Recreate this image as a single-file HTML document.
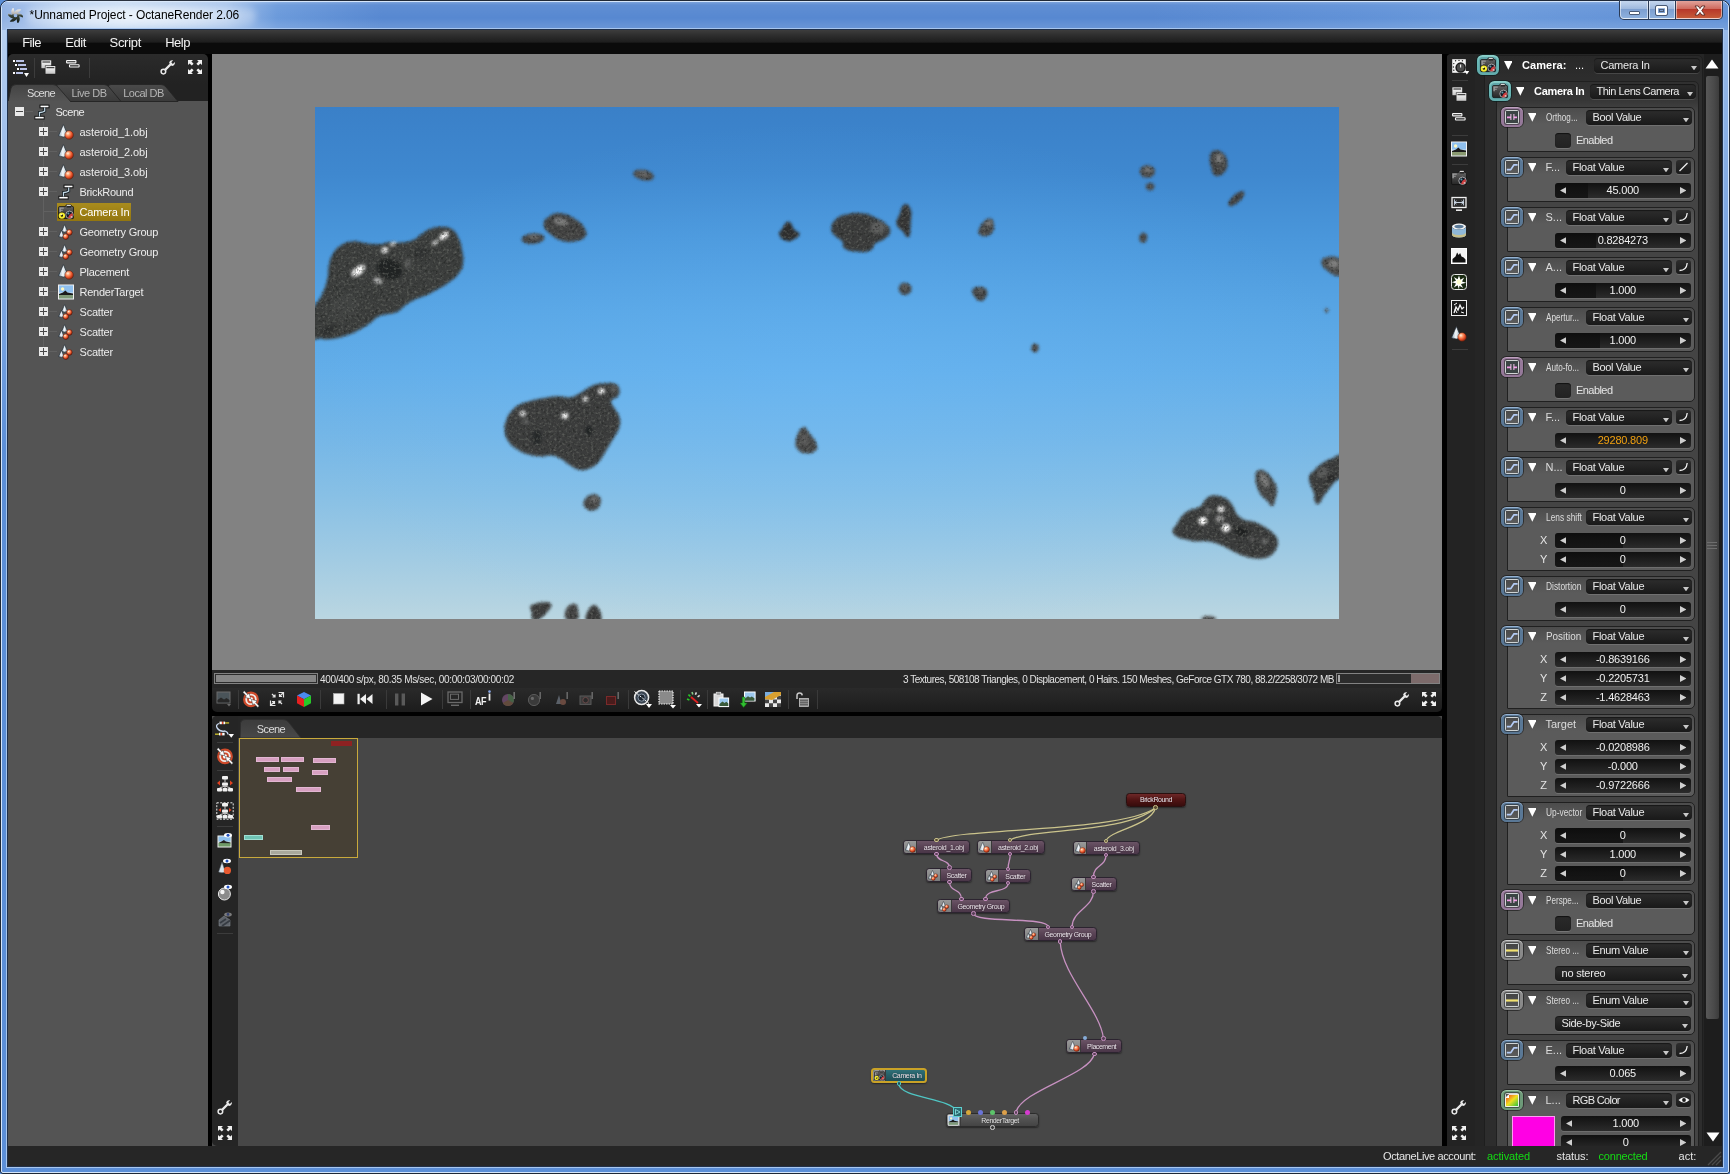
<!DOCTYPE html><html><head><meta charset="utf-8"><title>OctaneRender</title><style>html,body{margin:0;padding:0}
body{width:1730px;height:1174px;overflow:hidden;position:relative;background:#5b8ed6;font-family:"Liberation Sans",sans-serif}
div,span.t,svg{position:absolute;box-sizing:border-box}
span.t{white-space:pre;display:block}
#root{left:0;top:0;width:1730px;height:1174px;will-change:transform;background:transparent}
</style></head><body><div id="root"><div style="left:0px;top:0px;width:1730px;height:1174px;border-radius:8px 8px 3px 3px;background:#5c8fd8;border:1px solid #1f2836;"></div><div style="left:1px;top:1px;width:1728px;height:1172px;border-radius:7px 7px 2px 2px;border:1px solid #d6e6fa;"></div><div style="left:2px;top:2px;width:1726px;height:28px;border-radius:6px 6px 0 0;background:linear-gradient(90deg,#8fb0e2 0px,#9dbbe8 22px,#b4cef0 60px,#bcd4f1 120px,#9dbde9 225px,#6b9adb 275px,#5788d1 380px,#5788d1 1150px,#6091d7 1350px,#6b9adb 1500px,#6594d8 1620px,#6292d7 1726px);"></div><div style="left:2px;top:2px;width:1726px;height:28px;border-radius:6px 6px 0 0;background:linear-gradient(180deg,rgba(255,255,255,.22) 0px,rgba(255,255,255,.05) 3px,rgba(255,255,255,0) 16px,rgba(255,255,255,.07) 22px,rgba(255,255,255,.12) 28px);"></div><div style="left:26px;top:4px;width:230px;height:24px;border-radius:12px;background:radial-gradient(ellipse at center,rgba(255,255,255,.75) 0%,rgba(255,255,255,.55) 45%,rgba(255,255,255,0) 100%);filter:blur(3px);"></div><svg style="left:8px;top:7.500px" width="15" height="15" viewBox="-7.500 -7.500 15 15">
<defs><linearGradient id="pw" gradientUnits="userSpaceOnUse" x1="0" y1="-7" x2="0" y2="7"><stop offset="0" stop-color="#f0f0f0"/><stop offset=".36" stop-color="#b4b4b4"/><stop offset=".5" stop-color="#3a463a"/><stop offset="1" stop-color="#161c16"/></linearGradient></defs>
<g fill="url(#pw)"><path d="M-1.20 -2.20 Q3.80 -2.40 5.80 -6.00 Q0.00 -7.40 -3.30 -0.40 Z"/><path d="M1.31 -2.14 Q3.98 2.09 8.10 2.02 Q6.41 -3.70 -1.30 -3.06 Z"/><path d="M2.51 0.06 Q0.18 4.49 2.30 8.02 Q6.41 3.70 2.00 -2.66 Z"/><path d="M1.20 2.20 Q-3.80 2.40 -5.80 6.00 Q0.00 7.40 3.30 0.40 Z"/><path d="M-1.31 2.14 Q-3.98 -2.09 -8.10 -2.02 Q-6.41 3.70 1.30 3.06 Z"/><path d="M-2.51 -0.06 Q-0.18 -4.49 -2.30 -8.02 Q-6.41 -3.70 -2.00 2.66 Z"/><circle r="2.800" fill="none" stroke="url(#pw)" stroke-width="1.900"/></g></svg><span class="t" style="left:29.60px;top:7.00px;font-size:12px;line-height:16px;color:#000;letter-spacing:-0.089px;">*Unnamed Project - OctaneRender 2.06</span><div style="left:1619px;top:0px;width:104px;height:20px;border-radius:0 0 5px 5px;background:#2a3a55;"></div><div style="left:1620px;top:1px;width:28px;height:18px;border-radius:0 0 0 4px;background:linear-gradient(180deg,#c4d6ee 0%,#9fb9de 45%,#7d9fd0 50%,#8db0dd 100%);border:1px solid rgba(255,255,255,.55);border-top:none"></div><div style="left:1649px;top:1px;width:26px;height:18px;background:linear-gradient(180deg,#c4d6ee 0%,#9fb9de 45%,#7d9fd0 50%,#8db0dd 100%);border:1px solid rgba(255,255,255,.55);border-top:none"></div><div style="left:1676px;top:1px;width:46px;height:18px;border-radius:0 0 4px 0;background:linear-gradient(180deg,#e2a29a 0%,#cf6b5f 45%,#b8382a 50%,#c45a38 100%);border:1px solid rgba(255,255,255,.5);border-top:none"></div><div style="left:1629px;top:11px;width:11px;height:4px;background:#fff;border:1px solid #4a5a75;border-radius:1px"></div><div style="left:1656px;top:6px;width:11px;height:9px;background:transparent;border:2px solid #fff;outline:1px solid #4a5a75;border-radius:1px"></div><div style="left:1659px;top:9px;width:5px;height:3px;border:1px solid #4a5a75;"></div><svg style="left:1692.500px;top:4.500px" width="14" height="11" viewBox="0 0 14 11"><path d="M2 1h3.200L7 3.600 8.800 1H12L8.700 5.500 12 10H8.800L7 7.400 5.200 10H2l3.300-4.500z" fill="#fff" stroke="#5a2a25" stroke-width=".9"/></svg><div style="left:2px;top:30px;width:5px;height:420px;background:linear-gradient(180deg,rgba(200,220,246,.85),rgba(200,220,246,0));"></div><div style="left:1723px;top:30px;width:5px;height:420px;background:linear-gradient(180deg,rgba(200,220,246,.55),rgba(200,220,246,0));"></div><div style="left:6px;top:28px;width:1718px;height:1140px;border:1px solid #a8c6ee;"></div><div style="left:7px;top:29px;width:1716px;height:1138px;border:1px solid #20304a;background:#000;"></div><div style="left:8px;top:30px;width:1714px;height:24px;background:linear-gradient(180deg,#3d3d3d 0%,#2e2e2e 22%,#1e1e1e 50%,#0b0b0b 56%,#0b0b0b 100%);"></div><span class="t" style="left:22.20px;top:34.00px;font-size:13px;line-height:17px;color:#f2f2f2;letter-spacing:-0.563px;">File</span><span class="t" style="left:65.20px;top:34.00px;font-size:13px;line-height:17px;color:#f2f2f2;letter-spacing:-0.402px;">Edit</span><span class="t" style="left:109.50px;top:34.00px;font-size:13px;line-height:17px;color:#f2f2f2;letter-spacing:-0.289px;">Script</span><span class="t" style="left:165.20px;top:34.00px;font-size:13px;line-height:17px;color:#f2f2f2;letter-spacing:-0.487px;">Help</span><div style="left:8px;top:54px;width:1714px;height:1092px;background:#000;"></div><div style="left:8px;top:54px;width:200px;height:48px;background:linear-gradient(180deg,#2b2b2b 0px,#222 30px,#222 100%);border-radius:5px 5px 0 0;"></div><div style="left:8px;top:101px;width:200px;height:1045px;background:#545454;"></div><svg style="left:12px;top:59px" width="18" height="19" viewBox="0 0 18 19">
<g fill="#fff"><rect x="1" y="1" width="2" height="2"/><rect x="3" y="5" width="2" height="2"/><rect x="5" y="9" width="2" height="2"/><rect x="1" y="13" width="2" height="2"/></g>
<g fill="#b9c2e6"><rect x="4" y="1" width="8" height="2"/><rect x="6" y="5" width="8" height="2"/><rect x="8" y="9" width="7" height="2"/><rect x="4" y="13" width="7" height="2"/></g>
<path d="M12 14h5l-2.5 4z" fill="#fff"/></svg><div style="left:34px;top:58px;width:1px;height:20px;background:#3c3c3c"></div><svg style="left:40.5px;top:59.8px" width="16" height="15" viewBox="0 0 16 15">
<defs><linearGradient id="wg" x1="0" y1="0" x2="0" y2="1"><stop offset="0" stop-color="#fff"/><stop offset="1" stop-color="#c4c4c4"/></linearGradient></defs>
<rect x="0.400" y="0.400" width="9.800" height="7.800" fill="url(#wg)"/><rect x="1.400" y="1.500" width="7.800" height="1" fill="#161616"/>
<rect x="3.900" y="5.500" width="10.900" height="8.800" fill="#1c1c1c"/><rect x="4.500" y="6.100" width="9.800" height="7.700" fill="url(#wg)"/><rect x="5.400" y="7.200" width="8" height="1" fill="#161616"/></svg><svg style="left:66px;top:60px" width="14" height="8" viewBox="0 0 14 8">
<rect x="0.600" y="0.600" width="9.300" height="2.300" rx=".500" fill="#1e1e1e" stroke="#f6f6f6" stroke-width="1.100"/>
<rect x="3.500" y="4.700" width="9.600" height="2.300" rx=".500" fill="#1e1e1e" stroke="#f6f6f6" stroke-width="1.100"/></svg><div style="left:89px;top:58px;width:1px;height:20px;background:#3c3c3c"></div><svg style="left:160px;top:59px" width="16" height="16" viewBox="0 0 16 16">
<path d="M3.6 12.4 L10.2 5.8" stroke="#e9e9e9" stroke-width="2.3" stroke-linecap="round" fill="none"/>
<circle cx="3.4" cy="12.6" r="2.3" fill="#232323" stroke="#e9e9e9" stroke-width="1.5"/>
<path d="M9.1 4.1 A3.4 3.4 0 0 1 13.2 1.3 L11.3 3.3 L12.8 4.9 L14.9 3 A3.4 3.4 0 0 1 11.8 7 Z" fill="#e9e9e9"/></svg><svg style="left:187px;top:59px" width="16" height="16" viewBox="0 0 16 16">
<g fill="#f0f0f0"><path d="M1 1h5L4.4 2.6 6.6 4.8 4.8 6.6 2.6 4.4 1 6z"/><path d="M15 1v5l-1.6-1.6-2.2 2.2-1.8-1.8 2.2-2.2L10 1z"/>
<path d="M1 15v-5l1.6 1.6 2.2-2.2 1.8 1.8-2.2 2.2L6 15z"/><path d="M15 15h-5l1.6-1.6-2.2-2.2 1.8-1.8 2.2 2.2L15 10z"/></g></svg><svg style="left:8px;top:83px" width="200" height="19" viewBox="0 0 200 19">
<defs><linearGradient id="tg1" x1="0" y1="0" x2="0" y2="1"><stop offset="0" stop-color="#4a4a4a"/><stop offset="1" stop-color="#3a3a3a"/></linearGradient>
<linearGradient id="tg0" x1="0" y1="0" x2="0" y2="1"><stop offset="0" stop-color="#444"/><stop offset="1" stop-color="#545454"/></linearGradient></defs>
<path d="M100 18.5 L100 4 Q100 1.5 103 1.5 L153 1.5 Q156 1.5 158 4 L170 18.5Z" fill="url(#tg1)" stroke="#262626" stroke-width="1"/>
<path d="M48 18.5 L48 4 Q48 1.5 51 1.5 L96 1.5 Q99 1.5 101 4 L113 18.5Z" fill="url(#tg1)" stroke="#262626" stroke-width="1"/>
<path d="M0 19 L3 5 Q4 1.5 8 1.5 L45 1.5 Q48 1.5 50 4 L63 19Z" fill="url(#tg0)" stroke="#2a2a2a" stroke-width="1"/>
<rect x="0" y="18" width="62" height="1" fill="#545454"/>
</svg><span class="t" style="left:27.00px;top:86.20px;font-size:11px;line-height:14px;color:#dcdcdc;letter-spacing:-0.641px;">Scene</span><span class="t" style="left:71.40px;top:86.20px;font-size:11px;line-height:14px;color:#b4b4b4;letter-spacing:-0.462px;">Live DB</span><span class="t" style="left:123.20px;top:86.20px;font-size:11px;line-height:14px;color:#b4b4b4;letter-spacing:-0.505px;">Local DB</span><div style="left:43px;top:122px;width:1px;height:230px;background:#616161"></div><div style="left:15px;top:107px;width:9px;height:9px;background:#eaeaea;"><div style="left:1px;top:4px;width:7px;height:1px;background:#484848"></div></div><div style="left:25px;top:111px;width:8px;height:1px;background:#636363"></div><svg style="left:34px;top:104px" width="16" height="16" viewBox="0 0 16 16">
<path d="M10.7 3.6 L10.7 7 L8.2 8.2 L5.5 8.6 L5.5 12.4" fill="none" stroke="#1a2226" stroke-width="3"/>
<rect x="6" y="1.100" width="9" height="2.700" fill="#fff" stroke="#111" stroke-width="1"/>
<rect x="0.800" y="12.300" width="9.400" height="2.700" fill="#fff" stroke="#111" stroke-width="1"/>
<path d="M10.7 3.6 L10.7 7 L8.2 8.2 L5.5 8.6 L5.5 12.4" fill="none" stroke="#c4dae8" stroke-width="1.2"/></svg><span class="t" style="left:55.50px;top:104.70px;font-size:11px;line-height:14px;color:#ececec;letter-spacing:-0.501px;">Scene</span><div style="left:44px;top:131px;width:13px;height:1px;background:#616161"></div><div style="left:39px;top:127px;width:9px;height:9px;background:#eaeaea;"><div style="left:1px;top:4px;width:7px;height:1px;background:#484848"></div><div style="left:4px;top:1px;width:1px;height:7px;background:#484848"></div></div><svg style="left:58px;top:124px" width="16" height="16" viewBox="0 0 16 16">
<defs><radialGradient id="rbl0" cx="0.36" cy="0.32" r="0.75"><stop offset="0" stop-color="#fff2e2"/><stop offset="0.28" stop-color="#ffa070"/><stop offset="0.62" stop-color="#e65028"/><stop offset="1" stop-color="#7a1c08"/></radialGradient>
<linearGradient id="cnl0" x1="0" y1="0" x2="1" y2="0"><stop offset="0" stop-color="#8fa6b8"/><stop offset="0.45" stop-color="#f4f8fa"/><stop offset="1" stop-color="#8aa0b0"/></linearGradient></defs>
<path d="M5.4 0.5 L10.2 11.8 Q5.4 14.2 0.5 11.8 Z" fill="url(#cnl0)" stroke="#27313a" stroke-width="0.700"/>
<circle cx="11.1" cy="11" r="4.3" fill="url(#rbl0)" stroke="#5a2010" stroke-width="0.5"/></svg><span class="t" style="left:79.50px;top:124.70px;font-size:11px;line-height:14px;color:#ececec;letter-spacing:-0.079px;">asteroid_1.obj</span><div style="left:44px;top:151px;width:13px;height:1px;background:#616161"></div><div style="left:39px;top:147px;width:9px;height:9px;background:#eaeaea;"><div style="left:1px;top:4px;width:7px;height:1px;background:#484848"></div><div style="left:4px;top:1px;width:1px;height:7px;background:#484848"></div></div><svg style="left:58px;top:144px" width="16" height="16" viewBox="0 0 16 16">
<defs><radialGradient id="rbl1" cx="0.36" cy="0.32" r="0.75"><stop offset="0" stop-color="#fff2e2"/><stop offset="0.28" stop-color="#ffa070"/><stop offset="0.62" stop-color="#e65028"/><stop offset="1" stop-color="#7a1c08"/></radialGradient>
<linearGradient id="cnl1" x1="0" y1="0" x2="1" y2="0"><stop offset="0" stop-color="#8fa6b8"/><stop offset="0.45" stop-color="#f4f8fa"/><stop offset="1" stop-color="#8aa0b0"/></linearGradient></defs>
<path d="M5.4 0.5 L10.2 11.8 Q5.4 14.2 0.5 11.8 Z" fill="url(#cnl1)" stroke="#27313a" stroke-width="0.700"/>
<circle cx="11.1" cy="11" r="4.3" fill="url(#rbl1)" stroke="#5a2010" stroke-width="0.5"/></svg><span class="t" style="left:79.50px;top:144.70px;font-size:11px;line-height:14px;color:#ececec;letter-spacing:-0.079px;">asteroid_2.obj</span><div style="left:44px;top:171px;width:13px;height:1px;background:#616161"></div><div style="left:39px;top:167px;width:9px;height:9px;background:#eaeaea;"><div style="left:1px;top:4px;width:7px;height:1px;background:#484848"></div><div style="left:4px;top:1px;width:1px;height:7px;background:#484848"></div></div><svg style="left:58px;top:164px" width="16" height="16" viewBox="0 0 16 16">
<defs><radialGradient id="rbl2" cx="0.36" cy="0.32" r="0.75"><stop offset="0" stop-color="#fff2e2"/><stop offset="0.28" stop-color="#ffa070"/><stop offset="0.62" stop-color="#e65028"/><stop offset="1" stop-color="#7a1c08"/></radialGradient>
<linearGradient id="cnl2" x1="0" y1="0" x2="1" y2="0"><stop offset="0" stop-color="#8fa6b8"/><stop offset="0.45" stop-color="#f4f8fa"/><stop offset="1" stop-color="#8aa0b0"/></linearGradient></defs>
<path d="M5.4 0.5 L10.2 11.8 Q5.4 14.2 0.5 11.8 Z" fill="url(#cnl2)" stroke="#27313a" stroke-width="0.700"/>
<circle cx="11.1" cy="11" r="4.3" fill="url(#rbl2)" stroke="#5a2010" stroke-width="0.5"/></svg><span class="t" style="left:79.50px;top:164.70px;font-size:11px;line-height:14px;color:#ececec;letter-spacing:-0.079px;">asteroid_3.obj</span><div style="left:44px;top:191px;width:13px;height:1px;background:#616161"></div><div style="left:39px;top:187px;width:9px;height:9px;background:#eaeaea;"><div style="left:1px;top:4px;width:7px;height:1px;background:#484848"></div><div style="left:4px;top:1px;width:1px;height:7px;background:#484848"></div></div><svg style="left:58px;top:184px" width="16" height="16" viewBox="0 0 16 16">
<path d="M10.7 3.6 L10.7 7 L8.2 8.2 L5.5 8.6 L5.5 12.4" fill="none" stroke="#1a2226" stroke-width="3"/>
<rect x="6" y="1.100" width="9" height="2.700" fill="#fff" stroke="#111" stroke-width="1"/>
<rect x="0.800" y="12.300" width="9.400" height="2.700" fill="#fff" stroke="#111" stroke-width="1"/>
<path d="M10.7 3.6 L10.7 7 L8.2 8.2 L5.5 8.6 L5.5 12.4" fill="none" stroke="#c4dae8" stroke-width="1.2"/></svg><span class="t" style="left:79.50px;top:184.70px;font-size:11px;line-height:14px;color:#ececec;letter-spacing:-0.316px;">BrickRound</span><div style="left:44px;top:211px;width:13px;height:1px;background:#616161"></div><div style="left:57px;top:203px;width:74px;height:18px;background:linear-gradient(180deg,#a98c1e,#93760f);"></div><svg style="left:58px;top:204px" width="16" height="16" viewBox="0 0 16 16">
<defs><linearGradient id="cb" x1="0" y1="0" x2="0" y2="1"><stop offset="0" stop-color="#6e6e6e"/><stop offset=".5" stop-color="#454545"/><stop offset="1" stop-color="#262626"/></linearGradient></defs>
<path d="M0.600 3.400 Q0.600 2.600 1.600 2.600 L7.400 2.600 L8.300 0.900 L13 0.900 L13.800 2.600 L14.800 2.600 Q15.600 2.600 15.600 3.600 L15.600 13.400 Q15.600 14.600 14.400 14.600 L1.800 14.600 Q0.600 14.600 0.600 13.400Z" fill="url(#cb)" stroke="#101010" stroke-width="0.800"/>
<rect x="8.800" y="0.800" width="4" height="1.300" fill="#d6d6d6"/><rect x="8.600" y="2.300" width="4.400" height="1.100" fill="#0a0a0a"/>
<path d="M1.400 3.600h4.400v1.200h-3v1h2v1h-2v1.400h-1.400z" fill="#9c9c9c"/>
<circle cx="11.500" cy="10.800" r="3.700" fill="#151a26" stroke="#d8d8d8" stroke-width="0.700"/>
<path d="M11.500 10.800 L14.200 9 A3.200 3.200 0 0 1 10 13.700Z" fill="#cf3f3f"/>
<circle cx="10.400" cy="9.600" r="1" fill="#5f9aa8"/>
<circle cx="13.300" cy="12.900" r="0.700" fill="#fff"/>
<circle cx="3.900" cy="11.600" r="3.300" fill="#1a1400"/><circle cx="3.900" cy="11.600" r="2.200" fill="none" stroke="#f4ec30" stroke-width="2"/><circle cx="3.200" cy="10.600" r="0.800" fill="#ffffb0"/></svg><span class="t" style="left:79.50px;top:204.70px;font-size:11px;line-height:14px;color:#fff;letter-spacing:-0.151px;">Camera In</span><div style="left:44px;top:231px;width:13px;height:1px;background:#616161"></div><div style="left:39px;top:227px;width:9px;height:9px;background:#eaeaea;"><div style="left:1px;top:4px;width:7px;height:1px;background:#484848"></div><div style="left:4px;top:1px;width:1px;height:7px;background:#484848"></div></div><svg style="left:58px;top:224px" width="16" height="16" viewBox="0 0 16 16">
<defs><radialGradient id="rsl5" cx="0.36" cy="0.32" r="0.75"><stop offset="0" stop-color="#fff2e2"/><stop offset="0.28" stop-color="#ffa070"/><stop offset="0.62" stop-color="#e65028"/><stop offset="1" stop-color="#7a1c08"/></radialGradient>
<linearGradient id="csl5" x1="0" y1="0" x2="1" y2="0"><stop offset="0" stop-color="#8fa6b8"/><stop offset="0.45" stop-color="#f4f8fa"/><stop offset="1" stop-color="#8aa0b0"/></linearGradient></defs>
<path d="M6.600 0.600 L9.600 7.400 Q6.600 8.600 3.600 7.400 Z" fill="url(#csl5)" stroke="#27313a" stroke-width="0.700"/>
<path d="M3.400 6.200 L6.200 12.600 Q3.400 13.800 0.600 12.600 Z" fill="url(#csl5)" stroke="#27313a" stroke-width="0.700"/>
<circle cx="11.400" cy="8.400" r="2.800" fill="url(#rsl5)" stroke="#4a1408" stroke-width=".500"/><circle cx="7.800" cy="12.600" r="2.800" fill="url(#rsl5)" stroke="#4a1408" stroke-width=".500"/></svg><span class="t" style="left:79.50px;top:224.70px;font-size:11px;line-height:14px;color:#ececec;letter-spacing:-0.244px;">Geometry Group</span><div style="left:44px;top:251px;width:13px;height:1px;background:#616161"></div><div style="left:39px;top:247px;width:9px;height:9px;background:#eaeaea;"><div style="left:1px;top:4px;width:7px;height:1px;background:#484848"></div><div style="left:4px;top:1px;width:1px;height:7px;background:#484848"></div></div><svg style="left:58px;top:244px" width="16" height="16" viewBox="0 0 16 16">
<defs><radialGradient id="rsl6" cx="0.36" cy="0.32" r="0.75"><stop offset="0" stop-color="#fff2e2"/><stop offset="0.28" stop-color="#ffa070"/><stop offset="0.62" stop-color="#e65028"/><stop offset="1" stop-color="#7a1c08"/></radialGradient>
<linearGradient id="csl6" x1="0" y1="0" x2="1" y2="0"><stop offset="0" stop-color="#8fa6b8"/><stop offset="0.45" stop-color="#f4f8fa"/><stop offset="1" stop-color="#8aa0b0"/></linearGradient></defs>
<path d="M6.600 0.600 L9.600 7.400 Q6.600 8.600 3.600 7.400 Z" fill="url(#csl6)" stroke="#27313a" stroke-width="0.700"/>
<path d="M3.400 6.200 L6.200 12.600 Q3.400 13.800 0.600 12.600 Z" fill="url(#csl6)" stroke="#27313a" stroke-width="0.700"/>
<circle cx="11.400" cy="8.400" r="2.800" fill="url(#rsl6)" stroke="#4a1408" stroke-width=".500"/><circle cx="7.800" cy="12.600" r="2.800" fill="url(#rsl6)" stroke="#4a1408" stroke-width=".500"/></svg><span class="t" style="left:79.50px;top:244.70px;font-size:11px;line-height:14px;color:#ececec;letter-spacing:-0.244px;">Geometry Group</span><div style="left:44px;top:271px;width:13px;height:1px;background:#616161"></div><div style="left:39px;top:267px;width:9px;height:9px;background:#eaeaea;"><div style="left:1px;top:4px;width:7px;height:1px;background:#484848"></div><div style="left:4px;top:1px;width:1px;height:7px;background:#484848"></div></div><svg style="left:58px;top:264px" width="16" height="16" viewBox="0 0 16 16">
<defs><radialGradient id="rbl7" cx="0.36" cy="0.32" r="0.75"><stop offset="0" stop-color="#fff2e2"/><stop offset="0.28" stop-color="#ffa070"/><stop offset="0.62" stop-color="#e65028"/><stop offset="1" stop-color="#7a1c08"/></radialGradient>
<linearGradient id="cnl7" x1="0" y1="0" x2="1" y2="0"><stop offset="0" stop-color="#8fa6b8"/><stop offset="0.45" stop-color="#f4f8fa"/><stop offset="1" stop-color="#8aa0b0"/></linearGradient></defs>
<path d="M5.4 0.5 L10.2 11.8 Q5.4 14.2 0.5 11.8 Z" fill="url(#cnl7)" stroke="#27313a" stroke-width="0.700"/>
<circle cx="11.1" cy="11" r="4.3" fill="url(#rbl7)" stroke="#5a2010" stroke-width="0.5"/></svg><span class="t" style="left:79.50px;top:264.70px;font-size:11px;line-height:14px;color:#ececec;letter-spacing:-0.276px;">Placement</span><div style="left:44px;top:291px;width:13px;height:1px;background:#616161"></div><div style="left:39px;top:287px;width:9px;height:9px;background:#eaeaea;"><div style="left:1px;top:4px;width:7px;height:1px;background:#484848"></div><div style="left:4px;top:1px;width:1px;height:7px;background:#484848"></div></div><svg style="left:58px;top:284px" width="16" height="16" viewBox="0 0 16 16">
<rect x="0.5" y="1" width="15" height="14" fill="#cfe4f6" stroke="#f2f2f2" stroke-width="1"/>
<rect x="1" y="1.5" width="14" height="7" fill="#8fc0ee"/>
<circle cx="4.6" cy="5" r="1.7" fill="#fff8c0"/>
<path d="M1 10 L5 8.4 L7.4 6.6 L9.4 8.4 L15 9.4 L15 11 L1 11Z" fill="#1a1a1a"/>
<rect x="1" y="11" width="14" height="3.5" fill="#7f9a78"/></svg><span class="t" style="left:79.50px;top:284.70px;font-size:11px;line-height:14px;color:#ececec;letter-spacing:-0.246px;">RenderTarget</span><div style="left:44px;top:311px;width:13px;height:1px;background:#616161"></div><div style="left:39px;top:307px;width:9px;height:9px;background:#eaeaea;"><div style="left:1px;top:4px;width:7px;height:1px;background:#484848"></div><div style="left:4px;top:1px;width:1px;height:7px;background:#484848"></div></div><svg style="left:58px;top:304px" width="16" height="16" viewBox="0 0 16 16">
<defs><radialGradient id="rsl9" cx="0.36" cy="0.32" r="0.75"><stop offset="0" stop-color="#fff2e2"/><stop offset="0.28" stop-color="#ffa070"/><stop offset="0.62" stop-color="#e65028"/><stop offset="1" stop-color="#7a1c08"/></radialGradient>
<linearGradient id="csl9" x1="0" y1="0" x2="1" y2="0"><stop offset="0" stop-color="#8fa6b8"/><stop offset="0.45" stop-color="#f4f8fa"/><stop offset="1" stop-color="#8aa0b0"/></linearGradient></defs>
<path d="M6.600 0.600 L9.600 7.400 Q6.600 8.600 3.600 7.400 Z" fill="url(#csl9)" stroke="#27313a" stroke-width="0.700"/>
<path d="M3.400 6.200 L6.200 12.600 Q3.400 13.800 0.600 12.600 Z" fill="url(#csl9)" stroke="#27313a" stroke-width="0.700"/>
<circle cx="11.400" cy="8.400" r="2.800" fill="url(#rsl9)" stroke="#4a1408" stroke-width=".500"/><circle cx="7.800" cy="12.600" r="2.800" fill="url(#rsl9)" stroke="#4a1408" stroke-width=".500"/></svg><span class="t" style="left:79.50px;top:304.70px;font-size:11px;line-height:14px;color:#ececec;letter-spacing:-0.194px;">Scatter</span><div style="left:44px;top:331px;width:13px;height:1px;background:#616161"></div><div style="left:39px;top:327px;width:9px;height:9px;background:#eaeaea;"><div style="left:1px;top:4px;width:7px;height:1px;background:#484848"></div><div style="left:4px;top:1px;width:1px;height:7px;background:#484848"></div></div><svg style="left:58px;top:324px" width="16" height="16" viewBox="0 0 16 16">
<defs><radialGradient id="rsl10" cx="0.36" cy="0.32" r="0.75"><stop offset="0" stop-color="#fff2e2"/><stop offset="0.28" stop-color="#ffa070"/><stop offset="0.62" stop-color="#e65028"/><stop offset="1" stop-color="#7a1c08"/></radialGradient>
<linearGradient id="csl10" x1="0" y1="0" x2="1" y2="0"><stop offset="0" stop-color="#8fa6b8"/><stop offset="0.45" stop-color="#f4f8fa"/><stop offset="1" stop-color="#8aa0b0"/></linearGradient></defs>
<path d="M6.600 0.600 L9.600 7.400 Q6.600 8.600 3.600 7.400 Z" fill="url(#csl10)" stroke="#27313a" stroke-width="0.700"/>
<path d="M3.400 6.200 L6.200 12.600 Q3.400 13.800 0.600 12.600 Z" fill="url(#csl10)" stroke="#27313a" stroke-width="0.700"/>
<circle cx="11.400" cy="8.400" r="2.800" fill="url(#rsl10)" stroke="#4a1408" stroke-width=".500"/><circle cx="7.800" cy="12.600" r="2.800" fill="url(#rsl10)" stroke="#4a1408" stroke-width=".500"/></svg><span class="t" style="left:79.50px;top:324.70px;font-size:11px;line-height:14px;color:#ececec;letter-spacing:-0.194px;">Scatter</span><div style="left:44px;top:351px;width:13px;height:1px;background:#616161"></div><div style="left:39px;top:347px;width:9px;height:9px;background:#eaeaea;"><div style="left:1px;top:4px;width:7px;height:1px;background:#484848"></div><div style="left:4px;top:1px;width:1px;height:7px;background:#484848"></div></div><svg style="left:58px;top:344px" width="16" height="16" viewBox="0 0 16 16">
<defs><radialGradient id="rsl11" cx="0.36" cy="0.32" r="0.75"><stop offset="0" stop-color="#fff2e2"/><stop offset="0.28" stop-color="#ffa070"/><stop offset="0.62" stop-color="#e65028"/><stop offset="1" stop-color="#7a1c08"/></radialGradient>
<linearGradient id="csl11" x1="0" y1="0" x2="1" y2="0"><stop offset="0" stop-color="#8fa6b8"/><stop offset="0.45" stop-color="#f4f8fa"/><stop offset="1" stop-color="#8aa0b0"/></linearGradient></defs>
<path d="M6.600 0.600 L9.600 7.400 Q6.600 8.600 3.600 7.400 Z" fill="url(#csl11)" stroke="#27313a" stroke-width="0.700"/>
<path d="M3.400 6.200 L6.200 12.600 Q3.400 13.800 0.600 12.600 Z" fill="url(#csl11)" stroke="#27313a" stroke-width="0.700"/>
<circle cx="11.400" cy="8.400" r="2.800" fill="url(#rsl11)" stroke="#4a1408" stroke-width=".500"/><circle cx="7.800" cy="12.600" r="2.800" fill="url(#rsl11)" stroke="#4a1408" stroke-width=".500"/></svg><span class="t" style="left:79.50px;top:344.70px;font-size:11px;line-height:14px;color:#ececec;letter-spacing:-0.194px;">Scatter</span><div style="left:212px;top:54px;width:1230px;height:616px;background:#828282;"></div><svg style="left:315px;top:107px;overflow:hidden" width="1024" height="512" viewBox="0 0 1024 512"><defs>
<linearGradient id="sky" x1="0" y1="0" x2="0" y2="1">
<stop offset="0" stop-color="#3a80c8"/><stop offset="0.13" stop-color="#3f88cf"/><stop offset="0.26" stop-color="#4a97db"/><stop offset="0.40" stop-color="#58a5e4"/>
<stop offset="0.52" stop-color="#63aee9"/><stop offset="0.64" stop-color="#74b6e7"/><stop offset="0.76" stop-color="#88c0e5"/><stop offset="0.88" stop-color="#a1cbe3"/><stop offset="1" stop-color="#bad6e1"/></linearGradient>
<radialGradient id="skyc" cx="0.5" cy="0.55" r="0.52"><stop offset="0" stop-color="#70c0ff" stop-opacity="0.30"/><stop offset="1" stop-color="#70c0ff" stop-opacity="0"/></radialGradient>
<filter id="rock" x="-5%" y="-5%" width="110%" height="110%" color-interpolation-filters="sRGB">
<feGaussianBlur in="SourceGraphic" stdDeviation="1.7" result="b"/>
<feTurbulence type="fractalNoise" baseFrequency="0.38" numOctaves="2" seed="11" result="n"/>
<feColorMatrix in="n" type="matrix" values="0 0 0 0 0.40  0 0 0 0 0.41  0 0 0 0 0.39  2.000 0 0 0 -0.980" result="na"/>
<feComposite in="na" in2="b" operator="in" result="nc"/>
<feGaussianBlur in="nc" stdDeviation="0.5" result="spb"/>
<feColorMatrix in="n" type="matrix" values="0 0 0 0 0.13  0 0 0 0 0.14  0 0 0 0 0.13  0 -2.000 0 0 0.950" result="nd"/>
<feComposite in="nd" in2="b" operator="in" result="ndc"/>
<feGaussianBlur in="ndc" stdDeviation="0.6" result="ndb"/>
<feMerge><feMergeNode in="b"/><feMergeNode in="ndb"/><feMergeNode in="spb"/></feMerge>
</filter></defs><rect width="1024" height="512" fill="url(#sky)"/><rect width="1024" height="512" fill="url(#skyc)"/><g filter="url(#rock)"><path d="M-2.7 228.8C-5.0 222.2 -5.0 215.3 -2.7 205.2C-0.4 195.1 2.8 196.8 6.5 188.6C10.3 180.3 10.4 179.9 12.3 172.4C14.1 164.9 12.5 165.0 14.0 158.6C15.4 152.3 15.0 152.2 18.0 147.1C21.0 142.1 21.2 141.7 26.1 138.5C31.0 135.3 31.5 135.0 37.6 134.5C43.6 133.9 43.6 135.5 50.2 136.2C56.9 136.9 57.7 137.6 64.0 137.3C70.4 137.1 69.8 135.5 75.6 135.0C81.3 134.6 81.3 136.2 87.1 135.6C92.8 135.0 93.4 135.0 98.6 132.7C103.8 130.4 103.4 129.2 107.8 126.4C112.1 123.7 110.9 123.4 115.8 121.8C120.7 120.2 121.9 119.8 127.3 120.1C132.8 120.4 133.7 120.2 137.7 123.0C141.7 125.7 141.1 126.1 143.4 131.0C145.8 135.9 145.7 136.2 146.9 142.5C148.1 148.9 148.9 150.3 148.0 156.3C147.2 162.4 147.2 161.8 143.4 166.7C139.7 171.6 138.6 171.9 133.1 175.9C127.6 179.9 127.4 179.6 121.6 182.8C115.8 186.0 115.8 186.0 110.1 188.6C104.3 191.1 103.8 190.6 98.6 193.2C93.4 195.8 93.4 196.0 89.4 198.9C85.3 201.8 86.5 202.6 82.5 204.7C78.4 206.7 77.9 205.8 73.3 207.0C68.6 208.1 68.7 207.0 64.0 209.3C59.4 211.6 59.5 213.0 54.8 216.2C50.2 219.3 51.1 219.0 45.6 221.9C40.2 224.8 39.9 225.2 33.0 227.7C26.1 230.1 24.6 230.7 18.0 231.7C11.4 232.7 11.7 232.4 6.5 231.7C1.3 231.0 -0.4 235.5 -2.7 228.8Z" fill="#3b3d3c"/><ellipse cx="218.0" cy="131.6" rx="11.4" ry="5.1" fill="#454545" transform="rotate(-5 218.0 131.6)"/><path d="M228.8 117.7C228.5 112.8 231.2 111.5 235.5 108.7C239.8 105.9 240.0 105.9 246.0 106.6C252.0 107.4 253.7 108.2 259.5 111.7C265.3 115.3 266.5 116.2 269.1 120.7C271.8 125.3 272.4 126.4 270.0 129.8C267.6 133.1 265.2 133.3 259.5 134.3C253.9 135.2 253.1 135.2 247.5 133.7C241.8 132.2 241.6 132.2 237.0 128.3C232.3 124.3 229.2 122.6 228.8 117.7Z" fill="#424242"/><ellipse cx="328.6" cy="68.1" rx="10.5" ry="5.1" fill="#4a4a4a" transform="rotate(12 328.6 68.1)"/><path d="M473.5 114.7C476.7 114.9 476.8 119.8 479.5 122.8C482.2 125.9 484.3 124.5 484.3 126.8C484.3 129.0 482.8 130.1 479.5 131.9C476.3 133.6 475.2 134.6 471.4 133.7C467.6 132.8 465.6 131.1 464.5 128.3C463.4 125.4 464.6 125.6 466.9 122.2C469.2 118.9 470.3 114.6 473.5 114.7Z" fill="#2e2e2e"/><path d="M516.5 120.7C517.0 116.6 517.5 115.1 521.6 111.7C525.8 108.3 526.4 108.5 533.0 107.2C539.7 105.9 541.3 105.7 548.1 106.6C554.8 107.5 554.4 108.3 560.1 110.8C565.7 113.4 566.8 113.4 570.6 116.8C574.4 120.3 575.5 120.9 575.1 124.7C574.7 128.4 572.9 128.9 569.1 131.9C565.3 134.9 563.5 133.8 560.1 136.7C556.7 139.5 559.7 141.3 555.6 143.3C551.4 145.3 550.0 145.2 543.6 144.8C537.2 144.4 534.2 144.4 530.0 141.8C525.9 139.1 529.7 137.7 527.0 134.3C524.4 130.9 522.1 131.6 519.5 128.3C516.9 124.9 516.0 124.9 516.5 120.7Z" fill="#3a3b3b"/><path d="M589.5 97.6C592.3 96.5 594.0 98.0 595.6 102.7C597.1 107.4 596.0 109.5 595.6 116.2C595.1 123.0 595.9 127.9 593.7 129.8C591.6 131.6 590.2 127.0 587.1 123.7C584.1 120.5 582.3 121.0 581.7 116.8C581.1 112.7 582.8 112.0 584.7 107.2C586.7 102.4 586.8 98.7 589.5 97.6Z" fill="#353535"/><path d="M663.8 122.8C664.7 119.6 665.9 117.5 668.9 114.7C671.9 111.9 673.3 111.0 675.8 111.7C678.3 112.5 678.4 114.3 678.8 117.7C679.2 121.1 679.2 122.5 677.3 125.3C675.4 128.0 674.3 128.3 671.3 128.9C668.3 129.5 667.2 129.2 665.3 127.7C663.4 126.1 662.9 126.1 663.8 122.8Z" fill="#484848"/><ellipse cx="832.4" cy="64.5" rx="7.5" ry="6.3" fill="#4c4c4c" transform="rotate(0 832.4 64.5)"/><ellipse cx="835.1" cy="79.6" rx="4.2" ry="3.6" fill="#4a4a4a" transform="rotate(0 835.1 79.6)"/><path d="M895.2 48.6C896.4 43.9 897.8 43.9 901.2 43.5C904.6 43.1 906.0 43.9 908.7 47.1C911.5 50.3 912.2 51.6 912.4 56.1C912.5 60.6 912.1 62.0 909.3 65.1C906.6 68.3 904.4 69.5 901.2 68.7C898.1 68.0 898.2 67.2 896.7 62.1C895.2 57.1 894.1 53.3 895.2 48.6Z" fill="#444"/><ellipse cx="921.4" cy="91.6" rx="10.2" ry="3.9" fill="#404040" transform="rotate(-42 921.4 91.6)"/><ellipse cx="828.2" cy="130.7" rx="3.9" ry="5.1" fill="#484848" transform="rotate(10 828.2 130.7)"/><ellipse cx="590.1" cy="181.8" rx="6.3" ry="6.0" fill="#444" transform="rotate(20 590.1 181.8)"/><path d="M657.8 182.4C659.3 180.1 661.7 179.6 665.3 180.0C668.8 180.3 670.8 181.0 671.9 183.9C673.0 186.7 671.6 188.9 669.8 191.4C668.0 193.9 667.3 194.4 664.7 193.8C662.0 193.2 661.0 191.8 659.3 189.0C657.5 186.1 656.3 184.6 657.8 182.4Z" fill="#424242"/><ellipse cx="720.0" cy="241.0" rx="3.6" ry="4.2" fill="#4a4a4a" transform="rotate(15 720.0 241.0)"/><path d="M1006.4 155.3C1006.4 151.5 1009.1 150.7 1013.9 149.9C1018.8 149.1 1021.5 149.4 1026.0 152.3C1030.5 155.2 1032.0 157.2 1032.0 161.3C1032.0 165.5 1030.5 167.9 1026.0 168.8C1021.5 169.7 1018.8 168.3 1013.9 164.9C1009.1 161.5 1006.4 159.1 1006.4 155.3Z" fill="#4c4c4c"/><ellipse cx="1011.5" cy="203.4" rx="2.1" ry="2.1" fill="#5a6a78" transform="rotate(0 1011.5 203.4)"/><path d="M189.8 323.5C189.4 318.1 189.8 317.7 191.6 312.7C193.4 307.8 193.6 307.6 197.0 303.8C200.4 300.0 200.3 300.0 205.0 297.5C209.8 295.1 209.9 295.5 215.8 293.9C221.6 292.4 221.6 292.4 228.3 291.3C235.0 290.1 235.9 289.7 242.6 289.5C249.3 289.2 249.8 291.0 255.1 290.4C260.5 289.7 260.0 288.8 264.1 286.8C268.1 284.8 267.2 284.6 271.2 282.3C275.3 280.1 275.5 279.3 280.2 277.8C284.9 276.4 285.1 276.7 290.0 276.5C294.9 276.3 296.3 275.5 299.9 276.9C303.4 278.4 303.7 279.2 304.3 282.3C305.0 285.4 304.6 286.6 302.5 289.5C300.5 292.4 297.0 290.8 296.3 293.9C295.6 297.1 297.8 298.0 299.9 302.0C301.9 306.0 303.2 305.6 304.3 310.0C305.5 314.5 305.5 315.2 304.3 319.9C303.2 324.6 302.3 324.3 299.9 328.8C297.4 333.3 297.2 333.3 294.5 337.8C291.8 342.3 292.0 342.2 289.1 346.7C286.2 351.2 286.4 352.1 282.9 355.7C279.3 359.2 279.3 359.2 274.8 361.0C270.3 362.8 269.9 363.5 265.0 362.8C260.0 362.1 259.8 361.0 255.1 358.3C250.4 355.6 250.7 354.5 246.2 352.1C241.7 349.6 242.2 349.2 237.2 348.5C232.3 347.8 232.3 349.6 226.5 349.4C220.7 349.2 220.0 349.4 214.0 347.6C207.9 345.8 207.5 345.6 202.4 342.2C197.2 338.9 196.6 338.9 193.4 334.2C190.3 329.5 190.3 328.8 189.8 323.5Z" fill="#3b3c3c"/><path d="M269.1 394.3C270.4 391.0 272.3 388.8 276.0 387.7C279.8 386.5 281.9 387.3 284.1 389.8C286.4 392.2 286.3 393.9 285.1 397.3C283.8 400.7 282.6 402.4 279.0 403.3C275.5 404.2 273.4 403.1 270.9 400.9C268.4 398.6 267.8 397.6 269.1 394.3Z" fill="#464646"/><path d="M487.9 320.6C491.3 319.3 491.2 322.5 494.5 326.6C497.9 330.8 500.1 332.9 501.5 337.2C502.8 341.5 502.6 341.5 500.0 343.8C497.3 346.0 495.3 346.7 490.9 346.2C486.6 345.6 484.9 345.3 482.5 341.7C480.1 338.1 480.0 337.0 481.3 331.7C482.7 326.5 484.6 321.9 487.9 320.6Z" fill="#474747"/><path d="M217.4 498.0C222.1 495.7 232.6 493.8 235.5 496.5C238.3 499.1 233.0 504.3 228.8 508.5C224.7 512.6 221.9 513.7 218.9 513.0C215.9 512.2 217.2 509.2 216.8 505.5C216.4 501.7 212.8 500.2 217.4 498.0Z" fill="#3c3c3c"/><path d="M251.1 502.5C253.0 498.5 256.5 496.7 259.5 497.1C262.5 497.4 262.5 500.0 263.1 504.0C263.7 508.0 264.7 510.7 261.9 513.0C259.1 515.3 254.7 515.6 252.0 513.0C249.3 510.4 249.2 506.5 251.1 502.5Z" fill="#444"/><path d="M279.0 498.0C282.8 498.0 288.0 509.2 286.0 513.0C283.9 516.8 272.7 516.8 270.9 513.0C269.2 509.2 275.3 498.0 279.0 498.0Z" fill="#3a3a3a"/><path d="M857.8 423.6C858.1 420.6 859.7 420.9 862.1 417.1C864.5 413.4 864.2 412.1 867.5 408.6C870.7 405.1 870.7 405.4 874.9 403.2C879.2 401.1 880.8 402.4 884.6 400.0C888.3 397.6 887.2 396.3 889.9 393.6C892.6 390.9 891.5 390.4 895.3 389.3C899.0 388.3 900.3 388.3 904.9 389.3C909.4 390.4 910.0 390.7 913.4 393.6C916.9 396.6 916.6 397.6 918.8 401.1C920.9 404.6 919.3 404.6 922.0 407.5C924.7 410.5 925.2 411.0 929.5 412.9C933.8 414.7 934.0 413.1 939.1 415.0C944.2 416.9 945.0 417.4 949.8 420.3C954.6 423.3 955.1 423.3 958.4 426.8C961.6 430.2 962.1 430.2 962.6 434.2C963.2 438.3 962.6 439.0 960.5 442.8C958.4 446.6 958.4 447.1 954.1 449.2C949.8 451.4 949.3 451.4 943.4 451.4C937.5 451.4 937.0 451.1 930.6 449.2C924.1 447.3 924.2 446.8 917.7 443.9C911.3 440.9 911.3 439.9 904.9 437.5C898.5 435.0 898.2 435.1 892.1 434.2C885.9 433.4 885.9 434.8 880.3 434.2C874.7 433.7 874.4 433.4 869.6 432.1C864.8 430.8 864.0 431.0 861.0 428.9C858.1 426.8 857.6 426.5 857.8 423.6Z" fill="#3a3b3b"/><path d="M941.2 365.8C942.5 363.8 942.8 363.1 945.5 363.1C948.2 363.1 949.0 363.5 951.9 365.8C954.9 368.1 954.9 368.5 957.3 372.2C959.7 376.0 960.8 376.0 961.6 380.8C962.4 385.6 961.6 386.9 960.5 391.5C959.4 396.0 959.4 398.4 957.3 399.0C955.1 399.5 954.9 396.6 951.9 393.6C949.0 390.7 948.1 390.9 945.5 387.2C943.0 383.4 943.0 382.7 941.8 378.6C940.6 374.6 940.8 374.4 940.7 371.2C940.6 367.9 940.0 367.8 941.2 365.8Z" fill="#454646"/><path d="M1026.8 349.2C1024.4 344.8 1022.0 349.6 1017.2 351.4C1012.3 353.1 1012.1 353.1 1007.5 356.2C1003.0 359.3 1002.3 360.2 999.0 363.7C995.6 367.1 995.0 366.3 994.2 370.1C993.4 373.8 994.6 374.6 995.8 378.6C997.0 382.7 997.9 382.1 999.0 386.1C1000.1 390.1 998.7 392.1 1000.1 394.7C1001.4 397.2 1002.2 397.6 1004.3 396.3C1006.5 394.9 1005.9 393.2 1008.6 389.3C1011.3 385.4 1011.8 384.8 1015.0 380.8C1018.3 376.8 1018.5 376.2 1021.5 373.3C1024.4 370.3 1025.5 375.0 1026.8 369.0C1028.1 363.0 1029.2 353.7 1026.8 349.2Z" fill="#3a3b3b"/><ellipse cx="893.7" cy="512.1" rx="7.5" ry="3.0" fill="#555" transform="rotate(0 893.7 512.1)"/><ellipse cx="74.4" cy="162.1" rx="13.2" ry="9.8" fill="#1c1e1e" opacity="0.85" transform="rotate(20 74.4 162.1)"/><ellipse cx="105.5" cy="146.0" rx="7.5" ry="5.2" fill="#2a2c2c" opacity="0.6" transform="rotate(0 105.5 146.0)"/><ellipse cx="13.4" cy="223.1" rx="9.2" ry="4.0" fill="#262828" opacity="0.6" transform="rotate(-20 13.4 223.1)"/><ellipse cx="43.3" cy="163.8" rx="8.1" ry="4.1" fill="#ffffff" opacity="1" transform="rotate(-38 43.3 163.8)"/><ellipse cx="69.8" cy="143.1" rx="3.7" ry="3.0" fill="#f0f0f0" opacity="0.95" transform="rotate(-30 69.8 143.1)"/><ellipse cx="78.1" cy="137.0" rx="3.5" ry="2.1" fill="#dcdcdc" opacity="0.85" transform="rotate(-20 78.1 137.0)"/><ellipse cx="129.1" cy="128.7" rx="5.8" ry="3.2" fill="#ffffff" opacity="0.95" transform="rotate(-38 129.1 128.7)"/><ellipse cx="120.4" cy="135.6" rx="4.0" ry="2.1" fill="#e0e0e0" opacity="0.85" transform="rotate(-30 120.4 135.6)"/><ellipse cx="63.1" cy="173.8" rx="4.8" ry="2.8" fill="#c8c8c8" opacity="0.85" transform="rotate(20 63.1 173.8)"/><ellipse cx="92.8" cy="156.9" rx="2.3" ry="5.2" fill="#a0a0a0" opacity="0.372" transform="rotate(0 92.8 156.9)"/><ellipse cx="29.5" cy="200.1" rx="15.0" ry="11.5" fill="#484a48" opacity="0.5" transform="rotate(-30 29.5 200.1)"/><ellipse cx="218.9" cy="129.8" rx="5.1" ry="1.8" fill="#b0b0b0" opacity="0.434" transform="rotate(0 218.9 129.8)"/><ellipse cx="246.0" cy="114.7" rx="7.5" ry="3.6" fill="#c8c8c8" opacity="0.46499999999999997" transform="rotate(15 246.0 114.7)"/><ellipse cx="328.0" cy="66.9" rx="5.1" ry="2.1" fill="#aaa" opacity="0.372" transform="rotate(12 328.0 66.9)"/><ellipse cx="563.1" cy="120.7" rx="7.5" ry="6.0" fill="#9a9a9a" opacity="0.372" transform="rotate(0 563.1 120.7)"/><ellipse cx="673.7" cy="116.2" rx="3.3" ry="2.7" fill="#c0c0c0" opacity="0.434" transform="rotate(0 673.7 116.2)"/><ellipse cx="833.0" cy="62.7" rx="3.9" ry="2.7" fill="#b8b8b8" opacity="0.372" transform="rotate(0 833.0 62.7)"/><ellipse cx="904.2" cy="51.6" rx="4.2" ry="5.1" fill="#c4c4c4" opacity="0.434" transform="rotate(0 904.2 51.6)"/><ellipse cx="590.1" cy="180.0" rx="3.0" ry="2.1" fill="#a8a8a8" opacity="0.31" transform="rotate(0 590.1 180.0)"/><ellipse cx="665.3" cy="184.2" rx="3.0" ry="2.1" fill="#a8a8a8" opacity="0.31" transform="rotate(0 665.3 184.2)"/><ellipse cx="1018.5" cy="156.8" rx="5.4" ry="3.9" fill="#c8c8c8" opacity="0.434" transform="rotate(0 1018.5 156.8)"/><ellipse cx="222.0" cy="330.6" rx="4.9" ry="7.6" fill="#222426" opacity="0.8" transform="rotate(0 222.0 330.6)"/><ellipse cx="273.9" cy="323.5" rx="3.6" ry="4.9" fill="#1c1e20" opacity="0.85" transform="rotate(0 273.9 323.5)"/><ellipse cx="207.7" cy="306.5" rx="3.6" ry="3.1" fill="#e4e4e4" opacity="0.85" transform="rotate(0 207.7 306.5)"/><ellipse cx="210.9" cy="314.5" rx="3.6" ry="2.7" fill="#a8a8a8" opacity="0.31" transform="rotate(30 210.9 314.5)"/><ellipse cx="249.8" cy="308.7" rx="3.4" ry="3.4" fill="#ffffff" opacity="0.95" transform="rotate(0 249.8 308.7)"/><ellipse cx="270.3" cy="292.2" rx="3.1" ry="2.9" fill="#e8e8e8" opacity="0.85" transform="rotate(0 270.3 292.2)"/><ellipse cx="286.4" cy="284.1" rx="3.4" ry="3.2" fill="#ffffff" opacity="0.95" transform="rotate(0 286.4 284.1)"/><ellipse cx="299.0" cy="282.3" rx="3.6" ry="4.0" fill="#6a6a6a" opacity="0.6" transform="rotate(0 299.0 282.3)"/><ellipse cx="279.0" cy="392.8" rx="3.6" ry="2.7" fill="#bbb" opacity="0.372" transform="rotate(0 279.0 392.8)"/><ellipse cx="489.4" cy="332.7" rx="3.6" ry="6.0" fill="#8a8a8a" opacity="0.31" transform="rotate(0 489.4 332.7)"/><ellipse cx="926.3" cy="424.6" rx="7.0" ry="4.5" fill="#1a1c1c" opacity="0.85" transform="rotate(15 926.3 424.6)"/><ellipse cx="887.8" cy="413.9" rx="4.5" ry="4.1" fill="#ffffff" opacity="1" transform="rotate(0 887.8 413.9)"/><ellipse cx="906.0" cy="402.2" rx="3.7" ry="3.4" fill="#f0f0f0" opacity="0.9" transform="rotate(0 906.0 402.2)"/><ellipse cx="910.8" cy="420.9" rx="4.5" ry="4.1" fill="#ffffff" opacity="1" transform="rotate(0 910.8 420.9)"/><ellipse cx="904.9" cy="411.8" rx="4.3" ry="3.4" fill="#b4b4b4" opacity="0.8" transform="rotate(0 904.9 411.8)"/><ellipse cx="949.8" cy="434.2" rx="3.0" ry="3.0" fill="#b0b0b0" opacity="0.434" transform="rotate(0 949.8 434.2)"/><ellipse cx="893.1" cy="403.2" rx="3.2" ry="2.7" fill="#a8a8a8" opacity="0.434" transform="rotate(0 893.1 403.2)"/><ellipse cx="937.0" cy="432.1" rx="3.2" ry="2.7" fill="#8a8a8a" opacity="0.31" transform="rotate(0 937.0 432.1)"/><ellipse cx="949.3" cy="373.3" rx="3.7" ry="8.0" fill="#c4c4c4" opacity="0.434" transform="rotate(-25 949.3 373.3)"/><ellipse cx="1007.5" cy="365.8" rx="6.4" ry="4.8" fill="#8c8c8c" opacity="0.372" transform="rotate(-35 1007.5 365.8)"/><ellipse cx="1016.1" cy="371.2" rx="4.3" ry="3.2" fill="#1e1e1e" opacity="0.7" transform="rotate(0 1016.1 371.2)"/></g></svg><div style="left:212px;top:670px;width:1230px;height:18px;background:#262626;"></div><div style="left:214px;top:673px;width:104px;height:11px;background:#2c2c2c;border:1px solid #828282;"></div><div style="left:216px;top:675px;width:100px;height:7px;background:#868686;"></div><span class="t" style="left:320.00px;top:672.50px;font-size:10px;line-height:13px;color:#e2e2e2;letter-spacing:-0.322px;">400/400 s/px, 80.35 Ms/sec, 00:00:03/00:00:02</span><span class="t" style="left:903.00px;top:672.50px;font-size:10px;line-height:13px;color:#e2e2e2;letter-spacing:-0.486px;">3 Textures, 508108 Triangles, 0 Displacement, 0 Hairs. 150 Meshes, GeForce GTX 780, 88.2/2258/3072 MB</span><div style="left:1336px;top:673px;width:104px;height:11px;background:#2c2c2c;border:1px solid #828282;"></div><div style="left:1411px;top:674px;width:28px;height:9px;background:#7d6b6b;"></div><div style="left:1338px;top:675px;width:2px;height:7px;background:#a8a8a8;"></div><div style="left:212px;top:688px;width:1230px;height:24px;background:linear-gradient(180deg,#2a2a2a,#1c1c1c);border-radius:0 0 5px 5px;"></div><div style="left:238px;top:690px;width:1px;height:19px;background:#3a3a3a"></div><div style="left:320px;top:690px;width:1px;height:19px;background:#3a3a3a"></div><div style="left:386px;top:690px;width:1px;height:19px;background:#3a3a3a"></div><div style="left:442px;top:690px;width:1px;height:19px;background:#3a3a3a"></div><div style="left:470px;top:690px;width:1px;height:19px;background:#3a3a3a"></div><div style="left:628px;top:690px;width:1px;height:19px;background:#3a3a3a"></div><div style="left:680px;top:690px;width:1px;height:19px;background:#3a3a3a"></div><div style="left:707px;top:690px;width:1px;height:19px;background:#3a3a3a"></div><div style="left:788px;top:690px;width:1px;height:19px;background:#3a3a3a"></div><div style="left:817px;top:690px;width:1px;height:19px;background:#3a3a3a"></div><svg style="left:216.0px;top:691.0px;opacity:0.7" width="16" height="16" viewBox="0 0 16 16"><rect x="1" y="1" width="13" height="11" fill="#5a6870" stroke="#888" stroke-width="1"/><path d="M1.5 9 L5 6.5 8 8.5 10.5 7 13.5 9 13.5 11.5 1.5 11.5Z" fill="#2a2a2a"/><path d="M11 13h4l-2 2.6z" fill="#888"/></svg><svg style="left:242.0px;top:690.0px;opacity:1" width="18" height="18" viewBox="0 0 18 18"><circle cx="9" cy="9.400" r="6.800" fill="#f0e8e4" stroke="#cf4a2a" stroke-width="2.200"/><circle cx="9" cy="9.400" r="3" fill="#fff" stroke="#cf4a2a" stroke-width="1.800"/><g stroke="#222" stroke-width=".5" fill="#fff"><path d="M0.800 2.200L2.200 0.800 6 4.600 7.200 3.200 8.600 8.800 3 7.400 4.400 6z"/><path d="M17.200 16L15.800 17.400 12 13.600 10.800 15 9.400 9.400 15 10.800 13.600 12.200z"/></g></svg><svg style="left:269.0px;top:691.0px;opacity:1" width="16" height="16" viewBox="0 0 16 16"><g fill="none" stroke="#e4e4e4" stroke-width="1.200"><path d="M9.500 1.500h5v5M14.500 1.500L10.500 5.500M10.500 3v2.500h2.500"/><path d="M6.500 14.500h-5v-5M1.500 14.500l4-4M5.500 13v-2.500h-2.500"/><path d="M3 3l3 3M6 3.500v2.500h-2.500" /><path d="M13 13l-3-3M10 12.500v-2.500h2.500"/></g></svg><svg style="left:296.0px;top:690.5px;opacity:1" width="16" height="17" viewBox="0 0 16 17"><path d="M8 1L15 4.6 8 8.2 1 4.6Z" fill="#4a8af0"/><path d="M1 4.6L8 8.2V16L1 12.2Z" fill="#e82020"/><path d="M15 4.6L8 8.2V16L15 12.2Z" fill="#28c828"/></svg><svg style="left:333.0px;top:693.0px;opacity:1" width="12" height="12" viewBox="0 0 12 12"><rect x="0.5" y="0.5" width="10.5" height="10.5" fill="#f2f2f2" stroke="#b0b0b0" stroke-width=".6"/></svg><svg style="left:357.0px;top:693.0px;opacity:1" width="16" height="12" viewBox="0 0 16 12"><rect x="0.5" y="0.8" width="2.2" height="10.4" fill="#f0f0f0"/><path d="M9 1v10L3 6z" fill="#f0f0f0"/><path d="M15.5 1v10L9.5 6z" fill="#f0f0f0"/></svg><svg style="left:393.5px;top:692.5px;opacity:1" width="12" height="13" viewBox="0 0 12 13"><rect x="1" y="0.5" width="3.4" height="12" fill="#5a5a5a"/><rect x="7.6" y="0.5" width="3.4" height="12" fill="#5a5a5a"/></svg><svg style="left:419.5px;top:692.0px;opacity:1" width="13" height="14" viewBox="0 0 13 14"><path d="M1 0.5L12.5 7 1 13.5Z" fill="#f4f4f4"/></svg><svg style="left:447.0px;top:691.0px;opacity:1" width="16" height="16" viewBox="0 0 16 16"><rect x="1" y="1" width="14" height="10.5" fill="none" stroke="#6a6a6a" stroke-width="1.3"/><rect x="3.5" y="3.2" width="8" height="5.2" fill="none" stroke="#6a6a6a"/><rect x="4" y="13.6" width="8" height="1.4" fill="#6a6a6a"/></svg><span class="t" style="left:475px;top:694.5px;font-size:10.5px;line-height:13px;color:#f0f0f0;letter-spacing:-0.6px;font-weight:bold;transform:scaleX(.86);transform-origin:0 0">AF</span><svg style="left:487.0px;top:689.5px;opacity:1" width="5" height="11" viewBox="0 0 5 11"><rect x="1.6" y="3.6" width="1.8" height="7" fill="#eee"/><circle cx="2.5" cy="1.6" r="1.3" fill="#8aa8e8"/></svg><svg style="left:501.0px;top:691.0px;opacity:0.9" width="16" height="16" viewBox="0 0 16 16"><circle cx="7" cy="9" r="6" fill="#6a4a6a"/><path d="M7 9V3A6 6 0 0 1 12.2 12Z" fill="#4a6a4a"/><path d="M7 9L12.2 12A6 6 0 0 1 1.8 12Z" fill="#6a5040"/><rect x="12.4" y="1" width="1.6" height="7" fill="#777"/></svg><svg style="left:527.0px;top:691.0px;opacity:1" width="16" height="16" viewBox="0 0 16 16"><circle cx="7" cy="9" r="5.6" fill="#3a3a3a" stroke="#5a5a5a"/><circle cx="5.4" cy="7.4" r="1.6" fill="#6a6a6a"/><rect x="12.4" y="1" width="1.6" height="7" fill="#666"/></svg><svg style="left:554.0px;top:691.0px;opacity:1" width="16" height="16" viewBox="0 0 16 16"><path d="M5 4l2.6 9h-5.6z" fill="#5a6068"/><circle cx="9" cy="11" r="3" fill="#6a4a40"/><rect x="12.4" y="1" width="1.6" height="7" fill="#666"/></svg><svg style="left:579.0px;top:691.0px;opacity:1" width="16" height="16" viewBox="0 0 16 16"><rect x="1" y="5" width="11" height="8.4" fill="#3c3c3c" stroke="#5a5a5a"/><circle cx="6.6" cy="9.2" r="2.8" fill="#2a2a2a" stroke="#6a4a4a"/><rect x="12.4" y="1" width="1.6" height="7" fill="#666"/></svg><svg style="left:605.0px;top:691.0px;opacity:1" width="16" height="16" viewBox="0 0 16 16"><rect x="1.5" y="5.5" width="9" height="8" fill="#4a1c1c" stroke="#7a2a2a"/><rect x="12.4" y="1" width="1.6" height="7" fill="#666"/></svg><svg style="left:633.0px;top:689.0px;opacity:1" width="20" height="20" viewBox="0 0 20 20"><circle cx="8.6" cy="8.6" r="7" fill="#3a4450" stroke="#e8e8e8" stroke-width="1.5"/><circle cx="8.6" cy="8.6" r="3.6" fill="#1e2630" stroke="#9ab" stroke-width=".8"/><path d="M1.5 2.5L16 14.5" stroke="#fff" stroke-width="1" stroke-dasharray="2 1.4"/><path d="M13 15h6l-3 4z" fill="#fff"/></svg><svg style="left:658.0px;top:689.5px;opacity:1" width="18" height="19" viewBox="0 0 18 19"><rect x="1" y="1" width="14" height="13" fill="#8a8a8a" stroke="#f0f0f0" stroke-width="1.2" stroke-dasharray="1.4 1.1"/><path d="M12 15h6l-3 3.6z" fill="#fff"/></svg><svg style="left:685.0px;top:690.0px;opacity:1" width="18" height="18" viewBox="0 0 18 18"><g stroke-width="1.6" fill="none"><path d="M2 9l2.4 1" stroke="#28c828"/><path d="M3.4 4.6l2 1.8" stroke="#28c828"/><path d="M7 2l.8 2.6" stroke="#8c8"/><path d="M11.4 2.4l-1 2.4" stroke="#ddd"/><path d="M14.6 5.4l-2 1.6" stroke="#ddd"/></g><path d="M6 7L13 13" stroke="#e02020" stroke-width="1.8"/><path d="M11 14h6l-3 3.6z" fill="#fff"/></svg><svg style="left:712.5px;top:690.5px;opacity:1" width="17" height="17" viewBox="0 0 17 17"><rect x="1" y="3" width="9" height="12" fill="#d8d8d8" stroke="#f4f4f4"/><rect x="3.2" y="1.2" width="4.6" height="3" fill="#9a9a9a" stroke="#eee" stroke-width=".6"/><rect x="6" y="7" width="9.6" height="8.6" fill="#9cc8ee" stroke="#fff"/><path d="M6.5 13l3-2.4 2 1.4 1.8-1.2 2 1.6v2.6h-8.8z" fill="#3a5a3a"/></svg><svg style="left:738.5px;top:690.5px;opacity:1" width="17" height="17" viewBox="0 0 17 17"><rect x="5.5" y="1" width="10.6" height="9" fill="#9cc8ee" stroke="#fff"/><path d="M6 7.6l3-2.4 2 1.4 1.8-1.2 2.6 1.8v2.6H6z" fill="#3a5a3a"/><path d="M3.2 6v6H1l3.6 4.4L8.2 12H5.8V6z" fill="#30c030" stroke="#106010" stroke-width=".5"/></svg><svg style="left:764.0px;top:690.5px;opacity:1" width="18" height="17" viewBox="0 0 18 17"><rect x="1" y="1" width="16" height="15" fill="#e8e8e8"/><g fill="#444"><rect x="1" y="8.5" width="4" height="3.75"/><rect x="5" y="12.25" width="4" height="3.75"/><rect x="9" y="8.5" width="4" height="3.75"/><rect x="13" y="12.25" width="4" height="3.75"/><rect x="13" y="4.75" width="4" height="3.75"/></g><path d="M1 1h16v3L8 9 1 8z" fill="#d8a030"/><path d="M1 1h9l-9 5z" fill="#7aaee0"/></svg><svg style="left:794.0px;top:690.5px;opacity:1" width="16" height="17" viewBox="0 0 16 17"><path d="M3 8V4.6A2.6 2.6 0 0 1 8.2 4.4" fill="none" stroke="#c8c8c8" stroke-width="1.5"/><rect x="5.4" y="7.4" width="9" height="8" fill="#8a8a8a" stroke="#c4c4c4" stroke-width=".8"/><path d="M6 9.6h8M6 11.6h8M6 13.6h8" stroke="#555" stroke-width=".8"/></svg><svg style="left:1394px;top:691px" width="16" height="16" viewBox="0 0 16 16">
<path d="M3.6 12.4 L10.2 5.8" stroke="#e9e9e9" stroke-width="2.3" stroke-linecap="round" fill="none"/>
<circle cx="3.4" cy="12.6" r="2.3" fill="#222" stroke="#e9e9e9" stroke-width="1.5"/>
<path d="M9.1 4.1 A3.4 3.4 0 0 1 13.2 1.3 L11.3 3.3 L12.8 4.9 L14.9 3 A3.4 3.4 0 0 1 11.8 7 Z" fill="#e9e9e9"/></svg><svg style="left:1421px;top:691px" width="16" height="16" viewBox="0 0 16 16">
<g fill="#f0f0f0"><path d="M1 1h5L4.4 2.6 6.6 4.8 4.8 6.6 2.6 4.4 1 6z"/><path d="M15 1v5l-1.6-1.6-2.2 2.2-1.8-1.8 2.2-2.2L10 1z"/>
<path d="M1 15v-5l1.6 1.6 2.2-2.2 1.8 1.8-2.2 2.2L6 15z"/><path d="M15 15h-5l1.6-1.6-2.2-2.2 1.8-1.8 2.2 2.2L15 10z"/></g></svg><div style="left:212px;top:716px;width:1230px;height:430px;background:#474747;"></div><div style="left:212px;top:716px;width:1230px;height:22px;background:#262626;border-radius:5px 5px 0 0;"></div><div style="left:212px;top:716px;width:26px;height:430px;background:#252525;border-radius:5px 0 0 5px;"></div><svg style="left:240px;top:718px" width="64" height="20" viewBox="0 0 64 20"><defs><linearGradient id="gt" x1="0" y1="0" x2="0" y2="1"><stop offset="0" stop-color="#3c3c3c"/><stop offset="1" stop-color="#484848"/></linearGradient></defs>
<path d="M0 20L0.5 5Q1 1.5 5 1.5L43 1.5Q46.5 1.5 48.5 4L61 20Z" fill="url(#gt)" stroke="#2e2e2e"/></svg><span class="t" style="left:256.70px;top:721.60px;font-size:11px;line-height:14px;color:#dcdcdc;letter-spacing:-0.541px;">Scene</span><div style="left:239px;top:738px;width:119px;height:120px;background:#464035;border:1px solid #c9aa3c;"></div><div style="left:331px;top:741px;width:21px;height:5px;background:#8e2222;border:1px solid #8e2222;"></div><div style="left:256px;top:757px;width:23px;height:5px;background:#d7a0c1;border:1px solid #e2b6d2;"></div><div style="left:281px;top:757px;width:23px;height:5px;background:#d7a0c1;border:1px solid #e2b6d2;"></div><div style="left:313px;top:758px;width:23px;height:5px;background:#d7a0c1;border:1px solid #e2b6d2;"></div><div style="left:264px;top:767px;width:16px;height:5px;background:#d7a0c1;border:1px solid #e2b6d2;"></div><div style="left:283px;top:767px;width:16px;height:5px;background:#d7a0c1;border:1px solid #e2b6d2;"></div><div style="left:312px;top:770px;width:16px;height:5px;background:#d7a0c1;border:1px solid #e2b6d2;"></div><div style="left:267px;top:777px;width:25px;height:5px;background:#d7a0c1;border:1px solid #e2b6d2;"></div><div style="left:296px;top:787px;width:25px;height:5px;background:#d7a0c1;border:1px solid #e2b6d2;"></div><div style="left:311px;top:825px;width:19px;height:5px;background:#d7a0c1;border:1px solid #e2b6d2;"></div><div style="left:244px;top:835px;width:19px;height:5px;background:#6fc4b4;border:1px solid #a0e0d4;"></div><div style="left:270px;top:850px;width:32px;height:5px;background:#a8a89c;border:1px solid #c8c8bc;"></div><svg style="left:214.0px;top:719.0px;opacity:1" width="22" height="20" viewBox="0 0 22 20"><path d="M5 4.500Q1 6 3.500 9.500T11 12Q14 13 14 15.500" fill="none" stroke="#c8d8f0" stroke-width="1.300"/><g><rect x="5.500" y="2.600" width="2.400" height="2.600" fill="#fff"/><rect x="7.900" y="2.600" width="1.600" height="2.600" fill="#e04828"/><rect x="9.500" y="2.600" width="1.600" height="2.600" fill="#fff"/><rect x="11.100" y="3.400" width="4" height="1.100" fill="#f0e030"/><rect x="1" y="14.600" width="4" height="1.100" fill="#f0e030"/><rect x="5" y="13.800" width="1.600" height="2.600" fill="#fff"/><rect x="6.600" y="13.800" width="1.600" height="2.600" fill="#e04828"/><rect x="8.200" y="13.800" width="2.400" height="2.600" fill="#fff"/></g><path d="M14.500 15h5.500l-2.750 3.800z" fill="#fff"/></svg><div style="left:217px;top:742px;width:16px;height:1px;background:#3c3c3c"></div><svg style="left:216.0px;top:747.0px;opacity:1" width="18" height="18" viewBox="0 0 18 18"><circle cx="9" cy="9.400" r="6.800" fill="#f0e8e4" stroke="#cf4a2a" stroke-width="2.200"/><circle cx="9" cy="9.400" r="3" fill="#fff" stroke="#cf4a2a" stroke-width="1.800"/><g stroke="#222" stroke-width=".5" fill="#fff"><path d="M0.800 2.200L2.200 0.800 6 4.600 7.200 3.200 8.600 8.800 3 7.400 4.400 6z"/><path d="M17.200 16L15.800 17.400 12 13.600 10.800 15 9.400 9.400 15 10.800 13.600 12.200z"/></g></svg><div style="left:217px;top:770px;width:16px;height:1px;background:#3c3c3c"></div><svg style="left:216.0px;top:775.0px;opacity:1" width="18" height="18" viewBox="0 0 18 18"><g fill="#f0f0f0"><rect x="6" y="1" width="6" height="3.4" rx="1"/><rect x="6" y="7.4" width="6" height="3.4" rx="1"/><rect x="1" y="13" width="5" height="3.4" rx="1"/><rect x="12" y="13" width="5" height="3.4" rx="1"/><rect x="6.5" y="13" width="5" height="3.4" rx="1"/></g><path d="M9 4v3.4M9 10.8V13M9 11L3.5 13M9 11l5.5 2" stroke="#ddd" stroke-width=".9" fill="none"/><path d="M1 8l3-2.4v4.8zM17 8l-3-2.4v4.8z" fill="#e04020"/></svg><svg style="left:216.0px;top:802.0px;opacity:1" width="18" height="18" viewBox="0 0 18 18"><rect x="0.8" y="0.8" width="16.4" height="16.4" fill="none" stroke="#e8e8e8" stroke-width="1" stroke-dasharray="2 1.4"/><g fill="#f0f0f0"><rect x="6" y="1" width="6" height="3.4" rx="1"/><rect x="6" y="7.4" width="6" height="3.4" rx="1"/><rect x="1" y="13" width="5" height="3.4" rx="1"/><rect x="12" y="13" width="5" height="3.4" rx="1"/><rect x="6.5" y="13" width="5" height="3.4" rx="1"/></g><path d="M9 4v3.4M9 10.8V13M9 11L3.5 13M9 11l5.5 2" stroke="#ddd" stroke-width=".9" fill="none"/><path d="M2.4 8l2.6-2v4zM15.6 8l-2.6-2v4z" fill="#e04020"/></svg><div style="left:217px;top:826px;width:16px;height:1px;background:#3c3c3c"></div><svg style="left:217.0px;top:832.0px;opacity:1" width="16" height="16" viewBox="0 0 16 16"><rect x="1" y="4" width="13" height="11" fill="#cfe0d0" stroke="#f4f4f4"/><rect x="1.5" y="4.5" width="12" height="5" fill="#8fc0ee"/><rect x="1.5" y="11" width="12" height="3.5" fill="#6f9a68"/><path d="M1.5 11l3-1.6 2.4-1.4 2 1.6 4.6 1v.6z" fill="#222"/><ellipse cx="11" cy="3.2" rx="4" ry="2.2" fill="#fff"/><circle cx="11" cy="3.2" r="1.5" fill="#2050c0"/></svg><svg style="left:217.0px;top:857.5px;opacity:1" width="16" height="17" viewBox="0 0 16 17"><path d="M5 4L8.4 14Q5 15.4 1.6 14Z" fill="#d8e4ec" stroke="#4a5560" stroke-width=".5"/><circle cx="10.4" cy="12.4" r="3.6" fill="#e85a30"/><ellipse cx="10" cy="3" rx="4" ry="2.2" fill="#fff"/><circle cx="10" cy="3" r="1.5" fill="#2050c0"/></svg><svg style="left:217.0px;top:883.5px;opacity:1" width="16" height="17" viewBox="0 0 16 17"><circle cx="7.4" cy="10" r="6" fill="#8a8a8a" stroke="#e8e8e8"/><circle cx="5.4" cy="8" r="2.2" fill="#f4f4f4"/><ellipse cx="11" cy="3" rx="4" ry="2.2" fill="#fff"/><circle cx="11" cy="3" r="1.5" fill="#2050c0"/></svg><svg style="left:217.0px;top:910.5px;opacity:0.85" width="16" height="17" viewBox="0 0 16 17"><path d="M2 15V9l5-4 6 4v6z" fill="#6a7078" stroke="#8a9098" stroke-width=".6"/><path d="M3 12l6-4M5 15l8-5.4" stroke="#3a4048" stroke-width="1.8"/><ellipse cx="11" cy="3.4" rx="3.8" ry="2" fill="#8a8a8a"/><circle cx="11" cy="3.4" r="1.3" fill="#384880"/></svg><div style="left:217px;top:933px;width:16px;height:1px;background:#3c3c3c"></div><svg style="left:217px;top:1099px" width="16" height="16" viewBox="0 0 16 16">
<path d="M3.6 12.4 L10.2 5.8" stroke="#e9e9e9" stroke-width="2.3" stroke-linecap="round" fill="none"/>
<circle cx="3.4" cy="12.6" r="2.3" fill="#222" stroke="#e9e9e9" stroke-width="1.5"/>
<path d="M9.1 4.1 A3.4 3.4 0 0 1 13.2 1.3 L11.3 3.3 L12.8 4.9 L14.9 3 A3.4 3.4 0 0 1 11.8 7 Z" fill="#e9e9e9"/></svg><svg style="left:217px;top:1125px" width="16" height="16" viewBox="0 0 16 16">
<g fill="#f0f0f0"><path d="M1 1h5L4.4 2.6 6.6 4.8 4.8 6.6 2.6 4.4 1 6z"/><path d="M15 1v5l-1.6-1.6-2.2 2.2-1.8-1.8 2.2-2.2L10 1z"/>
<path d="M1 15v-5l1.6 1.6 2.2-2.2 1.8 1.8-2.2 2.2L6 15z"/><path d="M15 15h-5l1.6-1.6-2.2-2.2 1.8-1.8 2.2 2.2L15 10z"/></g></svg><svg style="left:0;top:0;pointer-events:none" width="1730" height="1174" viewBox="0 0 1730 1174"><path d="M1155.5 808C1120 832 960 828 936.6 840" fill="none" stroke="#cbc48c" stroke-width="1.2"/><path d="M1155.5 808C1125 834 1030 828 1010.2 840" fill="none" stroke="#cbc48c" stroke-width="1.2"/><path d="M1155.5 808C1150 826 1110 830 1106 841" fill="none" stroke="#cbc48c" stroke-width="1.2"/><path d="M936.6 854C936.6 862.1 949.5 859.4 949.5 867.5" fill="none" stroke="#c791c1" stroke-width="1.3"/><path d="M1010.2 854C1010.2 862.0 1008.2 860.5 1008.2 868.5" fill="none" stroke="#c791c1" stroke-width="1.3"/><path d="M1106 855C1106 866.8 1093.5 864.7 1093.5 876.5" fill="none" stroke="#c791c1" stroke-width="1.3"/><path d="M949.5 882C949.5 891.9 961.3 888.6 961.3 898.5" fill="none" stroke="#c791c1" stroke-width="1.3"/><path d="M1008.2 883C1008.2 893.1 985.7 888.4 985.7 898.5" fill="none" stroke="#c791c1" stroke-width="1.3"/><path d="M973.4 913.5C973.4 923.2 1047.9 916.8 1047.9 926.5" fill="none" stroke="#c791c1" stroke-width="1.3"/><path d="M1093.5 891.5C1093.5 907.2 1072.2 910.8 1072.2 926.5" fill="none" stroke="#c791c1" stroke-width="1.3"/><path d="M1060.2 942C1062 975 1100 1010 1103.4 1038" fill="none" stroke="#c791c1" stroke-width="1.3"/><path d="M1094.3 1054C1090 1075 1022 1090 1016 1112" fill="none" stroke="#c791c1" stroke-width="1.3"/><path d="M898.9 1084C900 1098 950 1098 957 1111" fill="none" stroke="#4fc6c4" stroke-width="1.3"/></svg><div style="left:1126.3px;top:792.5px;width:59.3px;height:14.5px;background:linear-gradient(180deg,#6e2828 0%,#521515 45%,#370c0c 100%);border:1px solid #2a1010;border-radius:3.5px;box-shadow:0 1px 1.5px rgba(0,0,0,.45);"></div><span class="t" style="left:1139.95px;top:795.45px;font-size:7px;line-height:9px;color:#efe6ee;letter-spacing:-0.419px;text-shadow:0 0 1px rgba(0,0,0,.6);">BrickRound</span><div style="left:902.7px;top:840.3px;width:67.6px;height:13.7px;background:linear-gradient(180deg,#6b5466 0%,#5a4456 45%,#4a3648 100%);border:1px solid #2c2430;border-radius:3.5px;box-shadow:0 1px 1.5px rgba(0,0,0,.45);"></div><div style="left:903.7px;top:841.3px;width:13.6px;height:11.7px;background:linear-gradient(180deg,#9a9a9a,#7c7c7c);border-radius:2.5px 0 0 2.5px;border-right:1px solid #3a3a3a;"></div><svg style="left:905.0px;top:841.7px;transform:scale(0.68);transform-origin:0 0" width="16" height="16" viewBox="0 0 16 16">
<defs><radialGradient id="rbg1" cx="0.36" cy="0.32" r="0.75"><stop offset="0" stop-color="#fff2e2"/><stop offset="0.28" stop-color="#ffa070"/><stop offset="0.62" stop-color="#e65028"/><stop offset="1" stop-color="#7a1c08"/></radialGradient>
<linearGradient id="cng1" x1="0" y1="0" x2="1" y2="0"><stop offset="0" stop-color="#8fa6b8"/><stop offset="0.45" stop-color="#f4f8fa"/><stop offset="1" stop-color="#8aa0b0"/></linearGradient></defs>
<path d="M5.4 0.5 L10.2 11.8 Q5.4 14.2 0.5 11.8 Z" fill="url(#cng1)" stroke="#27313a" stroke-width="0.700"/>
<circle cx="11.1" cy="11" r="4.3" fill="url(#rbg1)" stroke="#5a2010" stroke-width="0.5"/></svg><span class="t" style="left:923.80px;top:842.85px;font-size:7px;line-height:9px;color:#efe6ee;letter-spacing:-0.285px;text-shadow:0 0 1px rgba(0,0,0,.6);">asteroid_1.obj</span><div style="left:977px;top:840.3px;width:67.5px;height:13.7px;background:linear-gradient(180deg,#6b5466 0%,#5a4456 45%,#4a3648 100%);border:1px solid #2c2430;border-radius:3.5px;box-shadow:0 1px 1.5px rgba(0,0,0,.45);"></div><div style="left:978px;top:841.3px;width:13.6px;height:11.7px;background:linear-gradient(180deg,#9a9a9a,#7c7c7c);border-radius:2.5px 0 0 2.5px;border-right:1px solid #3a3a3a;"></div><svg style="left:979.3px;top:841.7px;transform:scale(0.68);transform-origin:0 0" width="16" height="16" viewBox="0 0 16 16">
<defs><radialGradient id="rbg1" cx="0.36" cy="0.32" r="0.75"><stop offset="0" stop-color="#fff2e2"/><stop offset="0.28" stop-color="#ffa070"/><stop offset="0.62" stop-color="#e65028"/><stop offset="1" stop-color="#7a1c08"/></radialGradient>
<linearGradient id="cng1" x1="0" y1="0" x2="1" y2="0"><stop offset="0" stop-color="#8fa6b8"/><stop offset="0.45" stop-color="#f4f8fa"/><stop offset="1" stop-color="#8aa0b0"/></linearGradient></defs>
<path d="M5.4 0.5 L10.2 11.8 Q5.4 14.2 0.5 11.8 Z" fill="url(#cng1)" stroke="#27313a" stroke-width="0.700"/>
<circle cx="11.1" cy="11" r="4.3" fill="url(#rbg1)" stroke="#5a2010" stroke-width="0.5"/></svg><span class="t" style="left:998.05px;top:842.85px;font-size:7px;line-height:9px;color:#efe6ee;letter-spacing:-0.285px;text-shadow:0 0 1px rgba(0,0,0,.6);">asteroid_2.obj</span><div style="left:1072.7px;top:841px;width:67.6px;height:14px;background:linear-gradient(180deg,#6b5466 0%,#5a4456 45%,#4a3648 100%);border:1px solid #2c2430;border-radius:3.5px;box-shadow:0 1px 1.5px rgba(0,0,0,.45);"></div><div style="left:1073.7px;top:842px;width:13.6px;height:12px;background:linear-gradient(180deg,#9a9a9a,#7c7c7c);border-radius:2.5px 0 0 2.5px;border-right:1px solid #3a3a3a;"></div><svg style="left:1075.0px;top:842.6px;transform:scale(0.68);transform-origin:0 0" width="16" height="16" viewBox="0 0 16 16">
<defs><radialGradient id="rbg1" cx="0.36" cy="0.32" r="0.75"><stop offset="0" stop-color="#fff2e2"/><stop offset="0.28" stop-color="#ffa070"/><stop offset="0.62" stop-color="#e65028"/><stop offset="1" stop-color="#7a1c08"/></radialGradient>
<linearGradient id="cng1" x1="0" y1="0" x2="1" y2="0"><stop offset="0" stop-color="#8fa6b8"/><stop offset="0.45" stop-color="#f4f8fa"/><stop offset="1" stop-color="#8aa0b0"/></linearGradient></defs>
<path d="M5.4 0.5 L10.2 11.8 Q5.4 14.2 0.5 11.8 Z" fill="url(#cng1)" stroke="#27313a" stroke-width="0.700"/>
<circle cx="11.1" cy="11" r="4.3" fill="url(#rbg1)" stroke="#5a2010" stroke-width="0.5"/></svg><span class="t" style="left:1093.80px;top:843.70px;font-size:7px;line-height:9px;color:#efe6ee;letter-spacing:-0.285px;text-shadow:0 0 1px rgba(0,0,0,.6);">asteroid_3.obj</span><div style="left:926px;top:867.8px;width:46.4px;height:14.2px;background:linear-gradient(180deg,#6b5466 0%,#5a4456 45%,#4a3648 100%);border:1px solid #2c2430;border-radius:3.5px;box-shadow:0 1px 1.5px rgba(0,0,0,.45);"></div><div style="left:927px;top:868.8px;width:13.6px;height:12.2px;background:linear-gradient(180deg,#9a9a9a,#7c7c7c);border-radius:2.5px 0 0 2.5px;border-right:1px solid #3a3a3a;"></div><svg style="left:928.3px;top:869.5px;transform:scale(0.68);transform-origin:0 0" width="16" height="16" viewBox="0 0 16 16">
<defs><radialGradient id="rsg2" cx="0.36" cy="0.32" r="0.75"><stop offset="0" stop-color="#fff2e2"/><stop offset="0.28" stop-color="#ffa070"/><stop offset="0.62" stop-color="#e65028"/><stop offset="1" stop-color="#7a1c08"/></radialGradient>
<linearGradient id="csg2" x1="0" y1="0" x2="1" y2="0"><stop offset="0" stop-color="#8fa6b8"/><stop offset="0.45" stop-color="#f4f8fa"/><stop offset="1" stop-color="#8aa0b0"/></linearGradient></defs>
<path d="M6.600 0.600 L9.600 7.400 Q6.600 8.600 3.600 7.400 Z" fill="url(#csg2)" stroke="#27313a" stroke-width="0.700"/>
<path d="M3.400 6.200 L6.200 12.600 Q3.400 13.800 0.600 12.600 Z" fill="url(#csg2)" stroke="#27313a" stroke-width="0.700"/>
<circle cx="11.400" cy="8.400" r="2.800" fill="url(#rsg2)" stroke="#4a1408" stroke-width=".500"/><circle cx="7.800" cy="12.600" r="2.800" fill="url(#rsg2)" stroke="#4a1408" stroke-width=".500"/></svg><span class="t" style="left:946.50px;top:870.60px;font-size:7px;line-height:9px;color:#efe6ee;letter-spacing:-0.312px;text-shadow:0 0 1px rgba(0,0,0,.6);">Scatter</span><div style="left:984.8px;top:869px;width:46.4px;height:14px;background:linear-gradient(180deg,#6b5466 0%,#5a4456 45%,#4a3648 100%);border:1px solid #2c2430;border-radius:3.5px;box-shadow:0 1px 1.5px rgba(0,0,0,.45);"></div><div style="left:985.8px;top:870px;width:13.6px;height:12px;background:linear-gradient(180deg,#9a9a9a,#7c7c7c);border-radius:2.5px 0 0 2.5px;border-right:1px solid #3a3a3a;"></div><svg style="left:987.1px;top:870.6px;transform:scale(0.68);transform-origin:0 0" width="16" height="16" viewBox="0 0 16 16">
<defs><radialGradient id="rsg2" cx="0.36" cy="0.32" r="0.75"><stop offset="0" stop-color="#fff2e2"/><stop offset="0.28" stop-color="#ffa070"/><stop offset="0.62" stop-color="#e65028"/><stop offset="1" stop-color="#7a1c08"/></radialGradient>
<linearGradient id="csg2" x1="0" y1="0" x2="1" y2="0"><stop offset="0" stop-color="#8fa6b8"/><stop offset="0.45" stop-color="#f4f8fa"/><stop offset="1" stop-color="#8aa0b0"/></linearGradient></defs>
<path d="M6.600 0.600 L9.600 7.400 Q6.600 8.600 3.600 7.400 Z" fill="url(#csg2)" stroke="#27313a" stroke-width="0.700"/>
<path d="M3.400 6.200 L6.200 12.600 Q3.400 13.800 0.600 12.600 Z" fill="url(#csg2)" stroke="#27313a" stroke-width="0.700"/>
<circle cx="11.400" cy="8.400" r="2.800" fill="url(#rsg2)" stroke="#4a1408" stroke-width=".500"/><circle cx="7.800" cy="12.600" r="2.800" fill="url(#rsg2)" stroke="#4a1408" stroke-width=".500"/></svg><span class="t" style="left:1005.30px;top:871.70px;font-size:7px;line-height:9px;color:#efe6ee;letter-spacing:-0.312px;text-shadow:0 0 1px rgba(0,0,0,.6);">Scatter</span><div style="left:1071.2px;top:877px;width:46.2px;height:14.3px;background:linear-gradient(180deg,#6b5466 0%,#5a4456 45%,#4a3648 100%);border:1px solid #2c2430;border-radius:3.5px;box-shadow:0 1px 1.5px rgba(0,0,0,.45);"></div><div style="left:1072.2px;top:878px;width:13.6px;height:12.3px;background:linear-gradient(180deg,#9a9a9a,#7c7c7c);border-radius:2.5px 0 0 2.5px;border-right:1px solid #3a3a3a;"></div><svg style="left:1073.5px;top:878.7px;transform:scale(0.68);transform-origin:0 0" width="16" height="16" viewBox="0 0 16 16">
<defs><radialGradient id="rsg2" cx="0.36" cy="0.32" r="0.75"><stop offset="0" stop-color="#fff2e2"/><stop offset="0.28" stop-color="#ffa070"/><stop offset="0.62" stop-color="#e65028"/><stop offset="1" stop-color="#7a1c08"/></radialGradient>
<linearGradient id="csg2" x1="0" y1="0" x2="1" y2="0"><stop offset="0" stop-color="#8fa6b8"/><stop offset="0.45" stop-color="#f4f8fa"/><stop offset="1" stop-color="#8aa0b0"/></linearGradient></defs>
<path d="M6.600 0.600 L9.600 7.400 Q6.600 8.600 3.600 7.400 Z" fill="url(#csg2)" stroke="#27313a" stroke-width="0.700"/>
<path d="M3.400 6.200 L6.200 12.600 Q3.400 13.800 0.600 12.600 Z" fill="url(#csg2)" stroke="#27313a" stroke-width="0.700"/>
<circle cx="11.400" cy="8.400" r="2.800" fill="url(#rsg2)" stroke="#4a1408" stroke-width=".500"/><circle cx="7.800" cy="12.600" r="2.800" fill="url(#rsg2)" stroke="#4a1408" stroke-width=".500"/></svg><span class="t" style="left:1091.60px;top:879.85px;font-size:7px;line-height:9px;color:#efe6ee;letter-spacing:-0.312px;text-shadow:0 0 1px rgba(0,0,0,.6);">Scatter</span><div style="left:937px;top:899px;width:73.2px;height:14.2px;background:linear-gradient(180deg,#6b5466 0%,#5a4456 45%,#4a3648 100%);border:1px solid #2c2430;border-radius:3.5px;box-shadow:0 1px 1.5px rgba(0,0,0,.45);"></div><div style="left:938px;top:900px;width:13.6px;height:12.2px;background:linear-gradient(180deg,#9a9a9a,#7c7c7c);border-radius:2.5px 0 0 2.5px;border-right:1px solid #3a3a3a;"></div><svg style="left:939.3px;top:900.7px;transform:scale(0.68);transform-origin:0 0" width="16" height="16" viewBox="0 0 16 16">
<defs><radialGradient id="rsg2" cx="0.36" cy="0.32" r="0.75"><stop offset="0" stop-color="#fff2e2"/><stop offset="0.28" stop-color="#ffa070"/><stop offset="0.62" stop-color="#e65028"/><stop offset="1" stop-color="#7a1c08"/></radialGradient>
<linearGradient id="csg2" x1="0" y1="0" x2="1" y2="0"><stop offset="0" stop-color="#8fa6b8"/><stop offset="0.45" stop-color="#f4f8fa"/><stop offset="1" stop-color="#8aa0b0"/></linearGradient></defs>
<path d="M6.600 0.600 L9.600 7.400 Q6.600 8.600 3.600 7.400 Z" fill="url(#csg2)" stroke="#27313a" stroke-width="0.700"/>
<path d="M3.400 6.200 L6.200 12.600 Q3.400 13.800 0.600 12.600 Z" fill="url(#csg2)" stroke="#27313a" stroke-width="0.700"/>
<circle cx="11.400" cy="8.400" r="2.800" fill="url(#rsg2)" stroke="#4a1408" stroke-width=".500"/><circle cx="7.800" cy="12.600" r="2.800" fill="url(#rsg2)" stroke="#4a1408" stroke-width=".500"/></svg><span class="t" style="left:957.40px;top:901.80px;font-size:7px;line-height:9px;color:#efe6ee;letter-spacing:-0.367px;text-shadow:0 0 1px rgba(0,0,0,.6);">Geometry Group</span><div style="left:1024px;top:927px;width:73.2px;height:14.3px;background:linear-gradient(180deg,#6b5466 0%,#5a4456 45%,#4a3648 100%);border:1px solid #2c2430;border-radius:3.5px;box-shadow:0 1px 1.5px rgba(0,0,0,.45);"></div><div style="left:1025px;top:928px;width:13.6px;height:12.3px;background:linear-gradient(180deg,#9a9a9a,#7c7c7c);border-radius:2.5px 0 0 2.5px;border-right:1px solid #3a3a3a;"></div><svg style="left:1026.3px;top:928.7px;transform:scale(0.68);transform-origin:0 0" width="16" height="16" viewBox="0 0 16 16">
<defs><radialGradient id="rsg2" cx="0.36" cy="0.32" r="0.75"><stop offset="0" stop-color="#fff2e2"/><stop offset="0.28" stop-color="#ffa070"/><stop offset="0.62" stop-color="#e65028"/><stop offset="1" stop-color="#7a1c08"/></radialGradient>
<linearGradient id="csg2" x1="0" y1="0" x2="1" y2="0"><stop offset="0" stop-color="#8fa6b8"/><stop offset="0.45" stop-color="#f4f8fa"/><stop offset="1" stop-color="#8aa0b0"/></linearGradient></defs>
<path d="M6.600 0.600 L9.600 7.400 Q6.600 8.600 3.600 7.400 Z" fill="url(#csg2)" stroke="#27313a" stroke-width="0.700"/>
<path d="M3.400 6.200 L6.200 12.600 Q3.400 13.800 0.600 12.600 Z" fill="url(#csg2)" stroke="#27313a" stroke-width="0.700"/>
<circle cx="11.400" cy="8.400" r="2.800" fill="url(#rsg2)" stroke="#4a1408" stroke-width=".500"/><circle cx="7.800" cy="12.600" r="2.800" fill="url(#rsg2)" stroke="#4a1408" stroke-width=".500"/></svg><span class="t" style="left:1044.40px;top:929.85px;font-size:7px;line-height:9px;color:#efe6ee;letter-spacing:-0.367px;text-shadow:0 0 1px rgba(0,0,0,.6);">Geometry Group</span><div style="left:1066.2px;top:1038.9px;width:56.2px;height:14.6px;background:linear-gradient(180deg,#6b5466 0%,#5a4456 45%,#4a3648 100%);border:1px solid #2c2430;border-radius:3.5px;box-shadow:0 1px 1.5px rgba(0,0,0,.45);"></div><div style="left:1067.2px;top:1039.9px;width:13.6px;height:12.6px;background:linear-gradient(180deg,#9a9a9a,#7c7c7c);border-radius:2.5px 0 0 2.5px;border-right:1px solid #3a3a3a;"></div><svg style="left:1068.5px;top:1040.8px;transform:scale(0.68);transform-origin:0 0" width="16" height="16" viewBox="0 0 16 16">
<defs><radialGradient id="rbg1" cx="0.36" cy="0.32" r="0.75"><stop offset="0" stop-color="#fff2e2"/><stop offset="0.28" stop-color="#ffa070"/><stop offset="0.62" stop-color="#e65028"/><stop offset="1" stop-color="#7a1c08"/></radialGradient>
<linearGradient id="cng1" x1="0" y1="0" x2="1" y2="0"><stop offset="0" stop-color="#8fa6b8"/><stop offset="0.45" stop-color="#f4f8fa"/><stop offset="1" stop-color="#8aa0b0"/></linearGradient></defs>
<path d="M5.4 0.5 L10.2 11.8 Q5.4 14.2 0.5 11.8 Z" fill="url(#cng1)" stroke="#27313a" stroke-width="0.700"/>
<circle cx="11.1" cy="11" r="4.3" fill="url(#rbg1)" stroke="#5a2010" stroke-width="0.5"/></svg><span class="t" style="left:1087.10px;top:1041.90px;font-size:7px;line-height:9px;color:#efe6ee;letter-spacing:-0.453px;text-shadow:0 0 1px rgba(0,0,0,.6);">Placement</span><div style="left:870.8px;top:1068.2px;width:56.6px;height:15.0px;background:linear-gradient(180deg,#2f7078 0%,#266068 45%,#1e4e56 100%);border:2px solid #c9a227;border-radius:3.5px;box-shadow:0 1px 1.5px rgba(0,0,0,.45);"></div><div style="left:872.8px;top:1070.2px;width:13.6px;height:11.0px;background:linear-gradient(180deg,#9a9a9a,#7c7c7c);border-radius:2.5px 0 0 2.5px;border-right:1px solid #3a3a3a;"></div><svg style="left:874.1px;top:1070.3px;transform:scale(0.68);transform-origin:0 0" width="16" height="16" viewBox="0 0 16 16">
<defs><linearGradient id="cb" x1="0" y1="0" x2="0" y2="1"><stop offset="0" stop-color="#6e6e6e"/><stop offset=".5" stop-color="#454545"/><stop offset="1" stop-color="#262626"/></linearGradient></defs>
<path d="M0.600 3.400 Q0.600 2.600 1.600 2.600 L7.400 2.600 L8.300 0.900 L13 0.900 L13.800 2.600 L14.800 2.600 Q15.600 2.600 15.600 3.600 L15.600 13.400 Q15.600 14.600 14.400 14.600 L1.800 14.600 Q0.600 14.600 0.600 13.400Z" fill="url(#cb)" stroke="#101010" stroke-width="0.800"/>
<rect x="8.800" y="0.800" width="4" height="1.300" fill="#d6d6d6"/><rect x="8.600" y="2.300" width="4.400" height="1.100" fill="#0a0a0a"/>
<path d="M1.400 3.600h4.400v1.200h-3v1h2v1h-2v1.400h-1.400z" fill="#9c9c9c"/>
<circle cx="11.500" cy="10.800" r="3.700" fill="#151a26" stroke="#d8d8d8" stroke-width="0.700"/>
<path d="M11.500 10.800 L14.200 9 A3.200 3.200 0 0 1 10 13.700Z" fill="#cf3f3f"/>
<circle cx="10.400" cy="9.600" r="1" fill="#5f9aa8"/>
<circle cx="13.300" cy="12.900" r="0.700" fill="#fff"/>
<circle cx="3.900" cy="11.600" r="3.300" fill="#1a1400"/><circle cx="3.900" cy="11.600" r="2.200" fill="none" stroke="#f4ec30" stroke-width="2"/><circle cx="3.200" cy="10.600" r="0.800" fill="#ffffb0"/></svg><span class="t" style="left:892.15px;top:1071.40px;font-size:7px;line-height:9px;color:#efe6ee;letter-spacing:-0.354px;text-shadow:0 0 1px rgba(0,0,0,.6);">Camera In</span><div style="left:946.1px;top:1113.4px;width:93.2px;height:13.9px;background:linear-gradient(180deg,#626262 0%,#525252 45%,#444 100%);border:1px solid #2c2c2c;border-radius:3.5px;box-shadow:0 1px 1.5px rgba(0,0,0,.45);"></div><div style="left:947.1px;top:1114.4px;width:13.6px;height:11.9px;background:linear-gradient(180deg,#9a9a9a,#7c7c7c);border-radius:2.5px 0 0 2.5px;border-right:1px solid #3a3a3a;"></div><svg style="left:948.4px;top:1114.9px;transform:scale(0.68);transform-origin:0 0" width="16" height="16" viewBox="0 0 16 16">
<rect x="0.5" y="1" width="15" height="14" fill="#cfe4f6" stroke="#f2f2f2" stroke-width="1"/>
<rect x="1" y="1.5" width="14" height="7" fill="#8fc0ee"/>
<circle cx="4.6" cy="5" r="1.7" fill="#fff8c0"/>
<path d="M1 10 L5 8.4 L7.4 6.6 L9.4 8.4 L15 9.4 L15 11 L1 11Z" fill="#1a1a1a"/>
<rect x="1" y="11" width="14" height="3.5" fill="#7f9a78"/></svg><span class="t" style="left:981.25px;top:1116.05px;font-size:7px;line-height:9px;color:#e8e8e8;letter-spacing:-0.410px;text-shadow:0 0 1px rgba(0,0,0,.6);">RenderTarget</span><div style="left:1153.2px;top:805.0px;width:4.6px;height:4.6px;border-radius:50%;border:1px solid #cbc48c;background:#5a4a30;"></div><div style="left:934.3px;top:837.9px;width:4.6px;height:4.6px;border-radius:50%;border:1px solid #cbc48c;background:#5a4a30;"></div><div style="left:1007.9px;top:837.9px;width:4.6px;height:4.6px;border-radius:50%;border:1px solid #cbc48c;background:#5a4a30;"></div><div style="left:1103.7px;top:838.7px;width:4.6px;height:4.6px;border-radius:50%;border:1px solid #cbc48c;background:#5a4a30;"></div><div style="left:934.3px;top:851.9px;width:4.6px;height:4.6px;border-radius:50%;border:1px solid #c791c1;background:#5a3f58;"></div><div style="left:1007.9px;top:851.9px;width:4.6px;height:4.6px;border-radius:50%;border:1px solid #c791c1;background:#5a3f58;"></div><div style="left:1103.7px;top:852.9px;width:4.6px;height:4.6px;border-radius:50%;border:1px solid #c791c1;background:#5a3f58;"></div><div style="left:947.2px;top:865.3px;width:4.6px;height:4.6px;border-radius:50%;border:1px solid #c791c1;background:#5a3f58;"></div><div style="left:1005.9px;top:866.5px;width:4.6px;height:4.6px;border-radius:50%;border:1px solid #c791c1;background:#5a3f58;"></div><div style="left:1091.2px;top:874.5px;width:4.6px;height:4.6px;border-radius:50%;border:1px solid #c791c1;background:#5a3f58;"></div><div style="left:947.2px;top:879.9px;width:4.6px;height:4.6px;border-radius:50%;border:1px solid #c791c1;background:#5a3f58;"></div><div style="left:1005.9px;top:880.9px;width:4.6px;height:4.6px;border-radius:50%;border:1px solid #c791c1;background:#5a3f58;"></div><div style="left:1091.2px;top:889.2px;width:4.6px;height:4.6px;border-radius:50%;border:1px solid #c791c1;background:#5a3f58;"></div><div style="left:959.0px;top:896.5px;width:4.6px;height:4.6px;border-radius:50%;border:1px solid #c791c1;background:#5a3f58;"></div><div style="left:983.4px;top:896.5px;width:4.6px;height:4.6px;border-radius:50%;border:1px solid #c791c1;background:#5a3f58;"></div><div style="left:971.1px;top:911.2px;width:4.6px;height:4.6px;border-radius:50%;border:1px solid #c791c1;background:#5a3f58;"></div><div style="left:1045.6px;top:924.5px;width:4.6px;height:4.6px;border-radius:50%;border:1px solid #c791c1;background:#5a3f58;"></div><div style="left:1069.9px;top:924.5px;width:4.6px;height:4.6px;border-radius:50%;border:1px solid #c791c1;background:#5a3f58;"></div><div style="left:1057.9px;top:939.3px;width:4.6px;height:4.6px;border-radius:50%;border:1px solid #c791c1;background:#5a3f58;"></div><div style="left:1101.1px;top:1036.3px;width:4.6px;height:4.6px;border-radius:50%;border:1px solid #c791c1;background:#5a3f58;"></div><div style="left:1092.0px;top:1051.5px;width:4.6px;height:4.6px;border-radius:50%;border:1px solid #c791c1;background:#5a3f58;"></div><div style="left:1013.7px;top:1110.3px;width:4.6px;height:4.6px;border-radius:50%;border:1px solid #c791c1;background:#5a3f58;"></div><div style="left:896.6px;top:1081.3px;width:4.6px;height:4.6px;border-radius:50%;border:1px solid #4fc6c4;background:#1f4e56;"></div><div style="left:990.2px;top:1125.1px;width:4.6px;height:4.6px;border-radius:50%;border:1px solid #d8d8d8;background:#3a3a3a;"></div><div style="left:1082.6px;top:1035.9px;width:4.6px;height:4.6px;border-radius:50%;background:#86acd8;"></div><div style="left:953px;top:1107.4px;width:9.4px;height:9.4px;background:#2a6a70;border:1.5px solid #5fd0d0;"></div><svg style="left:954.8px;top:1109.4px" width="6" height="6" viewBox="0 0 6 6"><path d="M.5 .5L5 3 .5 5.5z" fill="none" stroke="#9ee" stroke-width=".8"/></svg><div style="left:966.2px;top:1109.6px;width:5.2px;height:5.2px;border-radius:50%;background:#d8a83a;"></div><div style="left:977.9px;top:1109.6px;width:5.2px;height:5.2px;border-radius:50%;background:#6a74d8;"></div><div style="left:989.7px;top:1109.6px;width:5.2px;height:5.2px;border-radius:50%;background:#5cc46a;"></div><div style="left:1001.6px;top:1109.6px;width:5.2px;height:5.2px;border-radius:50%;background:#dca04a;"></div><div style="left:1025.2px;top:1109.6px;width:5.2px;height:5.2px;border-radius:50%;background:#d63cd0;"></div><div style="left:1447px;top:54px;width:275px;height:1092px;overflow:hidden;"><div style="left:-1px;top:0px;width:276px;height:1092px;background:#232323;border-radius:5px 0 0 0;"></div><div style="left:28px;top:0px;width:230px;height:1092px;background:#252525;"></div><div style="left:37px;top:0.5px;width:219px;height:1110px;background:linear-gradient(180deg,#282828 0px,#2d2d2d 22px,#2d2d2d 100%);border:1px solid #1e1e1e;border-radius:5px;"></div><div style="left:48.5px;top:26.5px;width:203.5px;height:1100px;background:linear-gradient(180deg,#303030 0px,#363636 18px,#444 30px,#444 100%);border:1px solid #202020;border-radius:5px;"></div><div style="left:257px;top:0px;width:18px;height:1092px;background:#1d1d1d;"></div><div style="left:258.5px;top:22px;width:13px;height:943px;background:linear-gradient(90deg,#585858,#4a4a4a 60%,#3c3c3c);border-radius:2px;"></div><div style="left:260px;top:488px;width:10px;height:1px;background:#6e6e6e"></div><div style="left:260px;top:491px;width:10px;height:1px;background:#6e6e6e"></div><div style="left:260px;top:494px;width:10px;height:1px;background:#6e6e6e"></div><svg style="left:258.0px;top:5.0px;opacity:1" width="14" height="10" viewBox="0 0 14 10"><path d="M7 0.5L13.5 9.5H0.5z" fill="#fff"/></svg><svg style="left:258.5px;top:1077.5px;opacity:1" width="14" height="10" viewBox="0 0 14 10"><path d="M0.5 0.5h13L7 9.5z" fill="#fff"/></svg><svg style="left:4.0px;top:4.0px;opacity:1" width="19" height="18" viewBox="0 0 19 18"><rect x="1.200" y="1.200" width="13.600" height="13.600" fill="#f4f4f4"/><g fill="#222"><circle cx="4.600" cy="2.800" r=".700"/><circle cx="8" cy="2.400" r=".700"/><circle cx="11.400" cy="2.800" r=".700"/><circle cx="2.800" cy="5.600" r=".700"/><circle cx="2.400" cy="9" r=".700"/><circle cx="2.800" cy="12.200" r=".700"/></g><circle cx="9.600" cy="9.600" r="4.500" fill="#4c4c4c" stroke="#1a1a1a" stroke-width="1.500"/><path d="M9.600 6.400v3" stroke="#f4f4f4" stroke-width="1.100"/><path d="M13.600 13h4.600l-2.300 3.600z" fill="#fff"/></svg><div style="left:5px;top:26px;width:16px;height:1px;background:#3c3c3c"></div><svg style="left:4.7999999999999545px;top:32.599999999999994px" width="16" height="15" viewBox="0 0 16 15">
<defs><linearGradient id="wg" x1="0" y1="0" x2="0" y2="1"><stop offset="0" stop-color="#fff"/><stop offset="1" stop-color="#c4c4c4"/></linearGradient></defs>
<rect x="0.400" y="0.400" width="9.800" height="7.800" fill="url(#wg)"/><rect x="1.400" y="1.500" width="7.800" height="1" fill="#161616"/>
<rect x="3.900" y="5.500" width="10.900" height="8.800" fill="#1c1c1c"/><rect x="4.500" y="6.100" width="9.800" height="7.700" fill="url(#wg)"/><rect x="5.400" y="7.200" width="8" height="1" fill="#161616"/></svg><svg style="left:5px;top:59px" width="14" height="8" viewBox="0 0 14 8">
<rect x="0.600" y="0.600" width="9.300" height="2.300" rx=".500" fill="#1e1e1e" stroke="#f6f6f6" stroke-width="1.100"/>
<rect x="3.500" y="4.700" width="9.600" height="2.300" rx=".500" fill="#1e1e1e" stroke="#f6f6f6" stroke-width="1.100"/></svg><div style="left:5px;top:81px;width:16px;height:1px;background:#3c3c3c"></div><svg style="left:4.0px;top:87.0px;opacity:1" width="16" height="16" viewBox="0 0 16 16"><rect x="0.5" y="1" width="15" height="14" fill="#cfe4f6" stroke="#f2f2f2"/><rect x="1" y="1.5" width="14" height="7" fill="#8fc0ee"/><circle cx="4.6" cy="5" r="1.7" fill="#fff8c0"/><path d="M1 10L5 8.4 7.4 6.6 9.4 8.4 15 9.4V11H1z" fill="#1a1a1a"/><rect x="1" y="11" width="14" height="3.5" fill="#8a9a70"/></svg><div style="left:5px;top:110px;width:16px;height:1px;background:#3c3c3c"></div><svg style="left:4px;top:116px" width="16" height="16" viewBox="0 0 16 16">
<defs><linearGradient id="cb" x1="0" y1="0" x2="0" y2="1"><stop offset="0" stop-color="#6e6e6e"/><stop offset=".5" stop-color="#454545"/><stop offset="1" stop-color="#262626"/></linearGradient></defs>
<path d="M0.600 3.400 Q0.600 2.600 1.600 2.600 L7.400 2.600 L8.300 0.900 L13 0.900 L13.800 2.600 L14.800 2.600 Q15.600 2.600 15.600 3.600 L15.600 13.400 Q15.600 14.600 14.400 14.600 L1.800 14.600 Q0.600 14.600 0.600 13.400Z" fill="url(#cb)" stroke="#101010" stroke-width="0.800"/>
<rect x="8.800" y="0.800" width="4" height="1.300" fill="#d6d6d6"/><rect x="8.600" y="2.300" width="4.400" height="1.100" fill="#0a0a0a"/>
<path d="M1.400 3.600h4.400v1.200h-3v1h2v1h-2v1.400h-1.400z" fill="#9c9c9c"/>
<circle cx="11.500" cy="10.800" r="3.700" fill="#151a26" stroke="#d8d8d8" stroke-width="0.700"/>
<path d="M11.500 10.800 L14.200 9 A3.200 3.200 0 0 1 10 13.700Z" fill="#cf3f3f"/>
<circle cx="10.400" cy="9.600" r="1" fill="#5f9aa8"/>
<circle cx="13.300" cy="12.900" r="0.700" fill="#fff"/>
</svg><svg style="left:4.0px;top:142.0px;opacity:1" width="17" height="17" viewBox="0 0 17 17"><rect x="1" y="1.5" width="14" height="10" fill="#2a2a2a" stroke="#f0f0f0" stroke-width="1.3"/><path d="M3.5 6.5h9M3.5 6.5l2-1.6M3.5 6.5l2 1.6M12.5 6.5l-2-1.6M12.5 6.5l-2 1.6" stroke="#d8e4f4" stroke-width=".9" fill="none"/><path d="M3.5 3.4v6M12.5 3.4v6" stroke="#d8e4f4" stroke-width=".8"/><rect x="5" y="13.4" width="6" height="1.6" fill="#e8e8e8"/></svg><svg style="left:4.0px;top:168.0px;opacity:1" width="16" height="17" viewBox="0 0 16 17"><ellipse cx="8" cy="4.6" rx="7" ry="3" fill="#f4f4f4"/><path d="M1 4.6v8q0 3 7 3t7-3v-8q0 3-7 3t-7-3z" fill="#8fb8d8"/><path d="M1 10q0 3 7 3t7-3v2.6q0 3-7 3t-7-3z" fill="#c8c08a"/><ellipse cx="8" cy="4.6" rx="4.6" ry="1.8" fill="#5a7a98"/></svg><svg style="left:4.0px;top:194.0px;opacity:1" width="16" height="16" viewBox="0 0 16 16"><rect x="0.5" y="0.5" width="15" height="15" fill="#f4f4f4" stroke="#fff"/><path d="M1.5 14.5V11l3-2.4 1.6-4 1.6 2.4 1.4-2 1.4 3.4 2.2 1.2 1.8 2v3z" fill="#111"/></svg><svg style="left:4.0px;top:220.0px;opacity:1" width="16" height="16" viewBox="0 0 16 16"><rect x="0.5" y="0.5" width="15" height="15" rx="3" fill="#1a2a12" stroke="#e8e8e8"/><path d="M8 1.6l1.4 4.2 3.8-2.2-2.2 3.8 4.2 1.4-4.2 1-1 .4 2.2 3.8-3.8-2.2L8 15.400l-1.400-4.200-3.800 2.200 2.200-3.800L.8 8.200l4.200-1.400L2.800 3l3.800 2.200z" fill="#fff"/><circle cx="8" cy="8" r="2.4" fill="#ffffd0"/></svg><svg style="left:4.0px;top:246.0px;opacity:1" width="16" height="16" viewBox="0 0 16 16"><rect x="0.5" y="0.5" width="15" height="15" fill="#1a1a1a" stroke="#f0f0f0"/><path d="M3 13l2-6 2 3 2-5 2 4 2-2" fill="none" stroke="#f4f4f4" stroke-width="1.3"/><path d="M3 5l3-2M10 12l3 1M4 9l2 4" stroke="#fff" stroke-width="1"/></svg><svg style="left:4px;top:272px" width="16" height="16" viewBox="0 0 16 16">
<defs><radialGradient id="rbrp" cx="0.36" cy="0.32" r="0.75"><stop offset="0" stop-color="#fff2e2"/><stop offset="0.28" stop-color="#ffa070"/><stop offset="0.62" stop-color="#e65028"/><stop offset="1" stop-color="#7a1c08"/></radialGradient>
<linearGradient id="cnrp" x1="0" y1="0" x2="1" y2="0"><stop offset="0" stop-color="#8fa6b8"/><stop offset="0.45" stop-color="#f4f8fa"/><stop offset="1" stop-color="#8aa0b0"/></linearGradient></defs>
<path d="M5.4 0.5 L10.2 11.8 Q5.4 14.2 0.5 11.8 Z" fill="url(#cnrp)" stroke="#27313a" stroke-width="0.700"/>
<circle cx="11.1" cy="11" r="4.3" fill="url(#rbrp)" stroke="#5a2010" stroke-width="0.5"/></svg><div style="left:5px;top:295px;width:16px;height:1px;background:#3c3c3c"></div><svg style="left:4px;top:1045px" width="16" height="16" viewBox="0 0 16 16">
<path d="M3.6 12.4 L10.2 5.8" stroke="#e9e9e9" stroke-width="2.3" stroke-linecap="round" fill="none"/>
<circle cx="3.4" cy="12.6" r="2.3" fill="#222" stroke="#e9e9e9" stroke-width="1.5"/>
<path d="M9.1 4.1 A3.4 3.4 0 0 1 13.2 1.3 L11.3 3.3 L12.8 4.9 L14.9 3 A3.4 3.4 0 0 1 11.8 7 Z" fill="#e9e9e9"/></svg><svg style="left:4px;top:1071px" width="16" height="16" viewBox="0 0 16 16">
<g fill="#f0f0f0"><path d="M1 1h5L4.4 2.6 6.6 4.8 4.8 6.6 2.6 4.4 1 6z"/><path d="M15 1v5l-1.6-1.6-2.2 2.2-1.8-1.8 2.2-2.2L10 1z"/>
<path d="M1 15v-5l1.6 1.6 2.2-2.2 1.8 1.8-2.2 2.2L6 15z"/><path d="M15 15h-5l1.6-1.6-2.2-2.2 1.8-1.8 2.2 2.2L15 10z"/></g></svg><div style="left:30px;top:1px;width:22px;height:20px;background:linear-gradient(180deg,#8ed2cc 0%,#6cbab8 30%,#62acac 100%);border-radius:5.500px;box-shadow:0 0 0 1px rgba(10,30,30,.7);"></div><div style="left:32px;top:3px;width:18px;height:16px;background:#5fa5a8;border-radius:3.500px;"></div><svg style="left:33px;top:3px" width="16" height="16" viewBox="0 0 16 16">
<defs><linearGradient id="cb" x1="0" y1="0" x2="0" y2="1"><stop offset="0" stop-color="#6e6e6e"/><stop offset=".5" stop-color="#454545"/><stop offset="1" stop-color="#262626"/></linearGradient></defs>
<path d="M0.600 3.400 Q0.600 2.600 1.600 2.600 L7.400 2.600 L8.300 0.900 L13 0.900 L13.800 2.600 L14.800 2.600 Q15.600 2.600 15.600 3.600 L15.600 13.400 Q15.600 14.600 14.400 14.600 L1.800 14.600 Q0.600 14.600 0.600 13.400Z" fill="url(#cb)" stroke="#101010" stroke-width="0.800"/>
<rect x="8.800" y="0.800" width="4" height="1.300" fill="#d6d6d6"/><rect x="8.600" y="2.300" width="4.400" height="1.100" fill="#0a0a0a"/>
<path d="M1.400 3.600h4.400v1.200h-3v1h2v1h-2v1.400h-1.400z" fill="#9c9c9c"/>
<circle cx="11.500" cy="10.800" r="3.700" fill="#151a26" stroke="#d8d8d8" stroke-width="0.700"/>
<path d="M11.500 10.800 L14.200 9 A3.200 3.200 0 0 1 10 13.700Z" fill="#cf3f3f"/>
<circle cx="10.400" cy="9.600" r="1" fill="#5f9aa8"/>
<circle cx="13.300" cy="12.900" r="0.700" fill="#fff"/>
<circle cx="3.900" cy="11.600" r="3.300" fill="#1a1400"/><circle cx="3.900" cy="11.600" r="2.200" fill="none" stroke="#f4ec30" stroke-width="2"/><circle cx="3.200" cy="10.600" r="0.800" fill="#ffffb0"/></svg><svg style="left:56.7px;top:6.9px;opacity:1" width="8.6" height="8.8" viewBox="0 0 8.6 8.8"><path d="M0 0h8.6L4.3 8.8z" fill="#fff"/></svg><span class="t" style="left:75.00px;top:4.30px;font-size:11px;line-height:14px;color:#fff;font-weight:bold;letter-spacing:0.067px;">Camera:</span><span class="t" style="left:128.00px;top:4.30px;font-size:11px;line-height:14px;color:#fff;letter-spacing:-0.057px;">...</span><div style="left:147px;top:3.799999999999997px;width:106px;height:15px;background:linear-gradient(180deg,#2d2d2d 0%,#232323 50%,#191919 100%);border-radius:4px;box-shadow:0 1px 0 rgba(255,255,255,.13),inset 0 1px 1px rgba(0,0,0,.5);"></div><span class="t" style="left:153.50px;top:3.60px;font-size:11px;line-height:14px;color:#e9e9e9;letter-spacing:-0.234px;">Camera In</span><svg style="left:243.5px;top:11.9px;opacity:1" width="6" height="4.4" viewBox="0 0 6 4.4"><path d="M0 0h6L3.0 4.4z" fill="#c8c8c8"/></svg><div style="left:42px;top:27px;width:22px;height:20px;background:linear-gradient(180deg,#8ed2cc 0%,#6cbab8 30%,#62acac 100%);border-radius:5.500px;box-shadow:0 0 0 1px rgba(10,30,30,.7);"></div><div style="left:44px;top:29px;width:18px;height:16px;background:#5fa5a8;border-radius:3.500px;"></div><svg style="left:45px;top:29px" width="16" height="16" viewBox="0 0 16 16">
<defs><linearGradient id="cb" x1="0" y1="0" x2="0" y2="1"><stop offset="0" stop-color="#6e6e6e"/><stop offset=".5" stop-color="#454545"/><stop offset="1" stop-color="#262626"/></linearGradient></defs>
<path d="M0.600 3.400 Q0.600 2.600 1.600 2.600 L7.400 2.600 L8.300 0.900 L13 0.900 L13.800 2.600 L14.800 2.600 Q15.600 2.600 15.600 3.600 L15.600 13.400 Q15.600 14.600 14.400 14.600 L1.800 14.600 Q0.600 14.600 0.600 13.400Z" fill="url(#cb)" stroke="#101010" stroke-width="0.800"/>
<rect x="8.800" y="0.800" width="4" height="1.300" fill="#d6d6d6"/><rect x="8.600" y="2.300" width="4.400" height="1.100" fill="#0a0a0a"/>
<path d="M1.400 3.600h4.400v1.200h-3v1h2v1h-2v1.400h-1.400z" fill="#9c9c9c"/>
<circle cx="11.500" cy="10.800" r="3.700" fill="#151a26" stroke="#d8d8d8" stroke-width="0.700"/>
<path d="M11.500 10.800 L14.200 9 A3.200 3.200 0 0 1 10 13.700Z" fill="#cf3f3f"/>
<circle cx="10.400" cy="9.600" r="1" fill="#5f9aa8"/>
<circle cx="13.300" cy="12.900" r="0.700" fill="#fff"/>
</svg><svg style="left:68.8px;top:32.9px;opacity:1" width="8.6" height="8.8" viewBox="0 0 8.6 8.8"><path d="M0 0h8.6L4.3 8.8z" fill="#fff"/></svg><span class="t" style="left:87.00px;top:30.30px;font-size:11px;line-height:14px;color:#fff;font-weight:bold;letter-spacing:-0.300px;">Camera In</span><div style="left:143px;top:29.799999999999997px;width:106px;height:15px;background:linear-gradient(180deg,#2d2d2d 0%,#232323 50%,#191919 100%);border-radius:4px;box-shadow:0 1px 0 rgba(255,255,255,.13),inset 0 1px 1px rgba(0,0,0,.5);"></div><span class="t" style="left:149.50px;top:29.60px;font-size:11px;line-height:14px;color:#e9e9e9;letter-spacing:-0.500px;">Thin Lens Camera</span><svg style="left:239.5px;top:37.9px;opacity:1" width="6" height="4.4" viewBox="0 0 6 4.4"><path d="M0 0h6L3.0 4.4z" fill="#c8c8c8"/></svg><div style="left:60px;top:52.5px;width:188px;height:45.5px;background:linear-gradient(180deg,#4c4c4c 0px,#5b5b5b 16px,#5b5b5b 100%);border:1px solid #202020;border-radius:5px 5px 5px 1px;"></div><div style="left:54px;top:53px;width:22px;height:20px;background:linear-gradient(180deg,#c4a6c4 0%,#96799a 30%,#96799a 100%);border-radius:5.5px;box-shadow:0 0 0 1px rgba(20,20,20,.6);"></div><div style="left:55.200000000000045px;top:54.2px;width:19.6px;height:17.6px;background:#96799a;border-radius:4.5px;"></div><div style="left:57.59999999999991px;top:56.2px;width:14.8px;height:13.6px;background:#3b4444;border:1px solid #d0d4d4;border-radius:1.5px;box-shadow:0 0 0 1px rgba(30,30,30,.55);"></div><svg style="left:59.7px;top:59.6px;opacity:1" width="10.8" height="6.6" viewBox="0 0 10.8 6.6"><path d="M0 3.300h3.900M6.900 3.300h3.900" stroke="#f49ae8" stroke-width="1.700"/><path d="M3.900 0v6.600M6.900 0v6.600" stroke="#f8c8f0" stroke-width="1"/></svg><svg style="left:80.7px;top:59.0px;opacity:1" width="8.6" height="8.8" viewBox="0 0 8.6 8.8"><path d="M0 0h8.6L4.3 8.8z" fill="#fff"/></svg><span class="t" style="left:98.50px;top:56.30px;font-size:11px;line-height:14px;color:#dcdcdc;transform:scaleX(0.74);transform-origin:0 50%;">Orthog...</span><div style="left:139px;top:55.5px;width:106px;height:15px;background:linear-gradient(180deg,#2d2d2d 0%,#232323 50%,#191919 100%);border-radius:4px;box-shadow:0 1px 0 rgba(255,255,255,.13),inset 0 1px 1px rgba(0,0,0,.5);"></div><span class="t" style="left:145.50px;top:56.30px;font-size:11px;line-height:14px;color:#e9e9e9;letter-spacing:-0.364px;">Bool Value</span><svg style="left:235.5px;top:63.6px;opacity:1" width="6" height="4.4" viewBox="0 0 6 4.4"><path d="M0 0h6L3.0 4.4z" fill="#c8c8c8"/></svg><div style="left:108px;top:78.5px;width:15.5px;height:15.5px;background:linear-gradient(180deg,#2a2a2a,#222);border-radius:3.5px;box-shadow:0 1px 0 rgba(255,255,255,.16),inset 0 1px 1px rgba(0,0,0,.6);"></div><span class="t" style="left:129.00px;top:79.30px;font-size:11px;line-height:14px;color:#e4e4e4;letter-spacing:-0.554px;">Enabled</span><div style="left:60px;top:102.5px;width:188px;height:45.5px;background:linear-gradient(180deg,#4c4c4c 0px,#5b5b5b 16px,#5b5b5b 100%);border:1px solid #202020;border-radius:5px 5px 5px 1px;"></div><div style="left:54px;top:103px;width:22px;height:20px;background:linear-gradient(180deg,#9bb8d8 0%,#5a7896 30%,#5a7896 100%);border-radius:5.5px;box-shadow:0 0 0 1px rgba(20,20,20,.6);"></div><div style="left:55.200000000000045px;top:104.19999999999999px;width:19.6px;height:17.6px;background:#5a7896;border-radius:4.5px;"></div><div style="left:57.59999999999991px;top:106.19999999999999px;width:14.8px;height:13.6px;background:linear-gradient(180deg,#4a4a4a,#5c5c5c);border:1px solid #d0d4d4;border-radius:1.5px;box-shadow:0 0 0 1px rgba(30,30,30,.55);"></div><svg style="left:59.0px;top:108.0px;opacity:1" width="12" height="10" viewBox="0 0 12 10"><path d="M0.800 7.600h4L8 2.800h3.600" fill="none" stroke="#b4ccf6" stroke-width="1.700" stroke-linejoin="round"/></svg><svg style="left:80.7px;top:109.0px;opacity:1" width="8.6" height="8.8" viewBox="0 0 8.6 8.8"><path d="M0 0h8.6L4.3 8.8z" fill="#fff"/></svg><span class="t" style="left:98.50px;top:106.30px;font-size:11px;line-height:14px;color:#dcdcdc;">F...</span><div style="left:119px;top:105.5px;width:106px;height:15px;background:linear-gradient(180deg,#2d2d2d 0%,#232323 50%,#191919 100%);border-radius:4px;box-shadow:0 1px 0 rgba(255,255,255,.13),inset 0 1px 1px rgba(0,0,0,.5);"></div><span class="t" style="left:125.50px;top:106.30px;font-size:11px;line-height:14px;color:#e9e9e9;letter-spacing:-0.280px;">Float Value</span><svg style="left:215.5px;top:113.6px;opacity:1" width="6" height="4.4" viewBox="0 0 6 4.4"><path d="M0 0h6L3.0 4.4z" fill="#c8c8c8"/></svg><div style="left:229px;top:106px;width:14.5px;height:14px;background:linear-gradient(180deg,#2d2d2d,#1a1a1a);border-radius:3px;box-shadow:0 1px 0 rgba(255,255,255,.13);"></div><svg style="left:231.0px;top:108.0px;opacity:1" width="11" height="10" viewBox="0 0 11 10"><path d="M1.500 9L9.500 1" stroke="#f0f0f0" stroke-width="1.300"/></svg><div style="left:108px;top:128.5px;width:135.5px;height:15px;background:linear-gradient(180deg,#111 0%,#1e1e1e 50%,#2b2b2b 100%);border-radius:3px;box-shadow:0 1px 0 rgba(255,255,255,.12);"></div><div style="left:108px;top:128.5px;width:32.519999999999996px;height:15px;background:linear-gradient(180deg,rgba(0,0,0,.25),rgba(0,0,0,.5));border-radius:3px 0 0 3px;"></div><svg style="left:113.0px;top:132.6px;opacity:1" width="6.4" height="7" viewBox="0 0 6.4 7"><path d="M6.4 0v7L0 3.5z" fill="#d0d0d0"/></svg><svg style="left:232.5px;top:132.6px;opacity:1" width="6.4" height="7" viewBox="0 0 6.4 7"><path d="M0 0v7l6.4-3.5z" fill="#d0d0d0"/></svg><span class="t" style="left:159.51px;top:129.40px;font-size:11px;line-height:14px;color:#f0f0f0;letter-spacing:-0.196px;">45.000</span><div style="left:60px;top:152.5px;width:188px;height:45.5px;background:linear-gradient(180deg,#4c4c4c 0px,#5b5b5b 16px,#5b5b5b 100%);border:1px solid #202020;border-radius:5px 5px 5px 1px;"></div><div style="left:54px;top:153px;width:22px;height:20px;background:linear-gradient(180deg,#9bb8d8 0%,#5a7896 30%,#5a7896 100%);border-radius:5.5px;box-shadow:0 0 0 1px rgba(20,20,20,.6);"></div><div style="left:55.200000000000045px;top:154.2px;width:19.6px;height:17.6px;background:#5a7896;border-radius:4.5px;"></div><div style="left:57.59999999999991px;top:156.2px;width:14.8px;height:13.6px;background:linear-gradient(180deg,#4a4a4a,#5c5c5c);border:1px solid #d0d4d4;border-radius:1.5px;box-shadow:0 0 0 1px rgba(30,30,30,.55);"></div><svg style="left:59.0px;top:158.0px;opacity:1" width="12" height="10" viewBox="0 0 12 10"><path d="M0.800 7.600h4L8 2.800h3.600" fill="none" stroke="#b4ccf6" stroke-width="1.700" stroke-linejoin="round"/></svg><svg style="left:80.7px;top:159.0px;opacity:1" width="8.6" height="8.8" viewBox="0 0 8.6 8.8"><path d="M0 0h8.6L4.3 8.8z" fill="#fff"/></svg><span class="t" style="left:98.50px;top:156.30px;font-size:11px;line-height:14px;color:#dcdcdc;">S...</span><div style="left:119px;top:155.5px;width:106px;height:15px;background:linear-gradient(180deg,#2d2d2d 0%,#232323 50%,#191919 100%);border-radius:4px;box-shadow:0 1px 0 rgba(255,255,255,.13),inset 0 1px 1px rgba(0,0,0,.5);"></div><span class="t" style="left:125.50px;top:156.30px;font-size:11px;line-height:14px;color:#e9e9e9;letter-spacing:-0.280px;">Float Value</span><svg style="left:215.5px;top:163.6px;opacity:1" width="6" height="4.4" viewBox="0 0 6 4.4"><path d="M0 0h6L3.0 4.4z" fill="#c8c8c8"/></svg><div style="left:229px;top:156px;width:14.5px;height:14px;background:linear-gradient(180deg,#2d2d2d,#1a1a1a);border-radius:3px;box-shadow:0 1px 0 rgba(255,255,255,.13);"></div><svg style="left:231.0px;top:158.0px;opacity:1" width="11" height="10" viewBox="0 0 11 10"><path d="M1.500 8.500Q8.500 8.500 9.200 1" fill="none" stroke="#f0f0f0" stroke-width="1.300"/></svg><div style="left:108px;top:178.5px;width:135.5px;height:15px;background:linear-gradient(180deg,#111 0%,#1e1e1e 50%,#2b2b2b 100%);border-radius:3px;box-shadow:0 1px 0 rgba(255,255,255,.12);"></div><div style="left:108px;top:178.5px;width:40.65px;height:15px;background:linear-gradient(180deg,rgba(0,0,0,.25),rgba(0,0,0,.5));border-radius:3px 0 0 3px;"></div><svg style="left:113.0px;top:182.6px;opacity:1" width="6.4" height="7" viewBox="0 0 6.4 7"><path d="M6.4 0v7L0 3.5z" fill="#d0d0d0"/></svg><svg style="left:232.5px;top:182.6px;opacity:1" width="6.4" height="7" viewBox="0 0 6.4 7"><path d="M0 0v7l6.4-3.5z" fill="#d0d0d0"/></svg><span class="t" style="left:150.66px;top:179.40px;font-size:11px;line-height:14px;color:#f0f0f0;letter-spacing:-0.202px;">0.8284273</span><div style="left:60px;top:202.5px;width:188px;height:45.5px;background:linear-gradient(180deg,#4c4c4c 0px,#5b5b5b 16px,#5b5b5b 100%);border:1px solid #202020;border-radius:5px 5px 5px 1px;"></div><div style="left:54px;top:203px;width:22px;height:20px;background:linear-gradient(180deg,#9bb8d8 0%,#5a7896 30%,#5a7896 100%);border-radius:5.5px;box-shadow:0 0 0 1px rgba(20,20,20,.6);"></div><div style="left:55.200000000000045px;top:204.2px;width:19.6px;height:17.6px;background:#5a7896;border-radius:4.5px;"></div><div style="left:57.59999999999991px;top:206.2px;width:14.8px;height:13.6px;background:linear-gradient(180deg,#4a4a4a,#5c5c5c);border:1px solid #d0d4d4;border-radius:1.5px;box-shadow:0 0 0 1px rgba(30,30,30,.55);"></div><svg style="left:59.0px;top:208.0px;opacity:1" width="12" height="10" viewBox="0 0 12 10"><path d="M0.800 7.600h4L8 2.800h3.600" fill="none" stroke="#b4ccf6" stroke-width="1.700" stroke-linejoin="round"/></svg><svg style="left:80.7px;top:209.0px;opacity:1" width="8.6" height="8.8" viewBox="0 0 8.6 8.8"><path d="M0 0h8.6L4.3 8.8z" fill="#fff"/></svg><span class="t" style="left:98.50px;top:206.30px;font-size:11px;line-height:14px;color:#dcdcdc;">A...</span><div style="left:119px;top:205.5px;width:106px;height:15px;background:linear-gradient(180deg,#2d2d2d 0%,#232323 50%,#191919 100%);border-radius:4px;box-shadow:0 1px 0 rgba(255,255,255,.13),inset 0 1px 1px rgba(0,0,0,.5);"></div><span class="t" style="left:125.50px;top:206.30px;font-size:11px;line-height:14px;color:#e9e9e9;letter-spacing:-0.280px;">Float Value</span><svg style="left:215.5px;top:213.6px;opacity:1" width="6" height="4.4" viewBox="0 0 6 4.4"><path d="M0 0h6L3.0 4.4z" fill="#c8c8c8"/></svg><div style="left:229px;top:206px;width:14.5px;height:14px;background:linear-gradient(180deg,#2d2d2d,#1a1a1a);border-radius:3px;box-shadow:0 1px 0 rgba(255,255,255,.13);"></div><svg style="left:231.0px;top:208.0px;opacity:1" width="11" height="10" viewBox="0 0 11 10"><path d="M1.500 8.500Q8.500 8.500 9.200 1" fill="none" stroke="#f0f0f0" stroke-width="1.300"/></svg><div style="left:108px;top:228.5px;width:135.5px;height:15px;background:linear-gradient(180deg,#111 0%,#1e1e1e 50%,#2b2b2b 100%);border-radius:3px;box-shadow:0 1px 0 rgba(255,255,255,.12);"></div><div style="left:108px;top:228.5px;width:40.65px;height:15px;background:linear-gradient(180deg,rgba(0,0,0,.25),rgba(0,0,0,.5));border-radius:3px 0 0 3px;"></div><svg style="left:113.0px;top:232.6px;opacity:1" width="6.4" height="7" viewBox="0 0 6.4 7"><path d="M6.4 0v7L0 3.5z" fill="#d0d0d0"/></svg><svg style="left:232.5px;top:232.6px;opacity:1" width="6.4" height="7" viewBox="0 0 6.4 7"><path d="M0 0v7l6.4-3.5z" fill="#d0d0d0"/></svg><span class="t" style="left:162.47px;top:229.40px;font-size:11px;line-height:14px;color:#f0f0f0;letter-spacing:-0.193px;">1.000</span><div style="left:60px;top:252.5px;width:188px;height:45.5px;background:linear-gradient(180deg,#4c4c4c 0px,#5b5b5b 16px,#5b5b5b 100%);border:1px solid #202020;border-radius:5px 5px 5px 1px;"></div><div style="left:54px;top:253px;width:22px;height:20px;background:linear-gradient(180deg,#9bb8d8 0%,#5a7896 30%,#5a7896 100%);border-radius:5.5px;box-shadow:0 0 0 1px rgba(20,20,20,.6);"></div><div style="left:55.200000000000045px;top:254.2px;width:19.6px;height:17.6px;background:#5a7896;border-radius:4.5px;"></div><div style="left:57.59999999999991px;top:256.2px;width:14.8px;height:13.6px;background:linear-gradient(180deg,#4a4a4a,#5c5c5c);border:1px solid #d0d4d4;border-radius:1.5px;box-shadow:0 0 0 1px rgba(30,30,30,.55);"></div><svg style="left:59.0px;top:258.0px;opacity:1" width="12" height="10" viewBox="0 0 12 10"><path d="M0.800 7.600h4L8 2.800h3.600" fill="none" stroke="#b4ccf6" stroke-width="1.700" stroke-linejoin="round"/></svg><svg style="left:80.7px;top:259.0px;opacity:1" width="8.6" height="8.8" viewBox="0 0 8.6 8.8"><path d="M0 0h8.6L4.3 8.8z" fill="#fff"/></svg><span class="t" style="left:98.50px;top:256.30px;font-size:11px;line-height:14px;color:#dcdcdc;transform:scaleX(0.74);transform-origin:0 50%;">Apertur...</span><div style="left:139px;top:255.5px;width:106px;height:15px;background:linear-gradient(180deg,#2d2d2d 0%,#232323 50%,#191919 100%);border-radius:4px;box-shadow:0 1px 0 rgba(255,255,255,.13),inset 0 1px 1px rgba(0,0,0,.5);"></div><span class="t" style="left:145.50px;top:256.30px;font-size:11px;line-height:14px;color:#e9e9e9;letter-spacing:-0.280px;">Float Value</span><svg style="left:235.5px;top:263.6px;opacity:1" width="6" height="4.4" viewBox="0 0 6 4.4"><path d="M0 0h6L3.0 4.4z" fill="#c8c8c8"/></svg><div style="left:108px;top:278.5px;width:135.5px;height:15px;background:linear-gradient(180deg,#111 0%,#1e1e1e 50%,#2b2b2b 100%);border-radius:3px;box-shadow:0 1px 0 rgba(255,255,255,.12);"></div><div style="left:108px;top:278.5px;width:44.715px;height:15px;background:linear-gradient(180deg,rgba(0,0,0,.25),rgba(0,0,0,.5));border-radius:3px 0 0 3px;"></div><svg style="left:113.0px;top:282.6px;opacity:1" width="6.4" height="7" viewBox="0 0 6.4 7"><path d="M6.4 0v7L0 3.5z" fill="#d0d0d0"/></svg><svg style="left:232.5px;top:282.6px;opacity:1" width="6.4" height="7" viewBox="0 0 6.4 7"><path d="M0 0v7l6.4-3.5z" fill="#d0d0d0"/></svg><span class="t" style="left:162.47px;top:279.40px;font-size:11px;line-height:14px;color:#f0f0f0;letter-spacing:-0.193px;">1.000</span><div style="left:60px;top:302.5px;width:188px;height:45.5px;background:linear-gradient(180deg,#4c4c4c 0px,#5b5b5b 16px,#5b5b5b 100%);border:1px solid #202020;border-radius:5px 5px 5px 1px;"></div><div style="left:54px;top:303px;width:22px;height:20px;background:linear-gradient(180deg,#c4a6c4 0%,#96799a 30%,#96799a 100%);border-radius:5.5px;box-shadow:0 0 0 1px rgba(20,20,20,.6);"></div><div style="left:55.200000000000045px;top:304.2px;width:19.6px;height:17.6px;background:#96799a;border-radius:4.5px;"></div><div style="left:57.59999999999991px;top:306.2px;width:14.8px;height:13.6px;background:#3b4444;border:1px solid #d0d4d4;border-radius:1.5px;box-shadow:0 0 0 1px rgba(30,30,30,.55);"></div><svg style="left:59.7px;top:309.6px;opacity:1" width="10.8" height="6.6" viewBox="0 0 10.8 6.6"><path d="M0 3.300h3.900M6.900 3.300h3.900" stroke="#f49ae8" stroke-width="1.700"/><path d="M3.900 0v6.600M6.900 0v6.600" stroke="#f8c8f0" stroke-width="1"/></svg><svg style="left:80.7px;top:309.0px;opacity:1" width="8.6" height="8.8" viewBox="0 0 8.6 8.8"><path d="M0 0h8.6L4.3 8.8z" fill="#fff"/></svg><span class="t" style="left:98.50px;top:306.30px;font-size:11px;line-height:14px;color:#dcdcdc;transform:scaleX(0.74);transform-origin:0 50%;">Auto-fo...</span><div style="left:139px;top:305.5px;width:106px;height:15px;background:linear-gradient(180deg,#2d2d2d 0%,#232323 50%,#191919 100%);border-radius:4px;box-shadow:0 1px 0 rgba(255,255,255,.13),inset 0 1px 1px rgba(0,0,0,.5);"></div><span class="t" style="left:145.50px;top:306.30px;font-size:11px;line-height:14px;color:#e9e9e9;letter-spacing:-0.364px;">Bool Value</span><svg style="left:235.5px;top:313.6px;opacity:1" width="6" height="4.4" viewBox="0 0 6 4.4"><path d="M0 0h6L3.0 4.4z" fill="#c8c8c8"/></svg><div style="left:108px;top:328.5px;width:15.5px;height:15.5px;background:linear-gradient(180deg,#2a2a2a,#222);border-radius:3.5px;box-shadow:0 1px 0 rgba(255,255,255,.16),inset 0 1px 1px rgba(0,0,0,.6);"></div><span class="t" style="left:129.00px;top:329.30px;font-size:11px;line-height:14px;color:#e4e4e4;letter-spacing:-0.554px;">Enabled</span><div style="left:60px;top:352.5px;width:188px;height:45.5px;background:linear-gradient(180deg,#4c4c4c 0px,#5b5b5b 16px,#5b5b5b 100%);border:1px solid #202020;border-radius:5px 5px 5px 1px;"></div><div style="left:54px;top:353px;width:22px;height:20px;background:linear-gradient(180deg,#9bb8d8 0%,#5a7896 30%,#5a7896 100%);border-radius:5.5px;box-shadow:0 0 0 1px rgba(20,20,20,.6);"></div><div style="left:55.200000000000045px;top:354.2px;width:19.6px;height:17.6px;background:#5a7896;border-radius:4.5px;"></div><div style="left:57.59999999999991px;top:356.2px;width:14.8px;height:13.6px;background:linear-gradient(180deg,#4a4a4a,#5c5c5c);border:1px solid #d0d4d4;border-radius:1.5px;box-shadow:0 0 0 1px rgba(30,30,30,.55);"></div><svg style="left:59.0px;top:358.0px;opacity:1" width="12" height="10" viewBox="0 0 12 10"><path d="M0.800 7.600h4L8 2.800h3.600" fill="none" stroke="#b4ccf6" stroke-width="1.700" stroke-linejoin="round"/></svg><svg style="left:80.7px;top:359.0px;opacity:1" width="8.6" height="8.8" viewBox="0 0 8.6 8.8"><path d="M0 0h8.6L4.3 8.8z" fill="#fff"/></svg><span class="t" style="left:98.50px;top:356.30px;font-size:11px;line-height:14px;color:#dcdcdc;">F...</span><div style="left:119px;top:355.5px;width:106px;height:15px;background:linear-gradient(180deg,#2d2d2d 0%,#232323 50%,#191919 100%);border-radius:4px;box-shadow:0 1px 0 rgba(255,255,255,.13),inset 0 1px 1px rgba(0,0,0,.5);"></div><span class="t" style="left:125.50px;top:356.30px;font-size:11px;line-height:14px;color:#e9e9e9;letter-spacing:-0.280px;">Float Value</span><svg style="left:215.5px;top:363.6px;opacity:1" width="6" height="4.4" viewBox="0 0 6 4.4"><path d="M0 0h6L3.0 4.4z" fill="#c8c8c8"/></svg><div style="left:229px;top:356px;width:14.5px;height:14px;background:linear-gradient(180deg,#2d2d2d,#1a1a1a);border-radius:3px;box-shadow:0 1px 0 rgba(255,255,255,.13);"></div><svg style="left:231.0px;top:358.0px;opacity:1" width="11" height="10" viewBox="0 0 11 10"><path d="M1.500 8.500Q8.500 8.500 9.200 1" fill="none" stroke="#f0f0f0" stroke-width="1.300"/></svg><div style="left:108px;top:378.5px;width:135.5px;height:15px;background:linear-gradient(180deg,#111 0%,#1e1e1e 50%,#2b2b2b 100%);border-radius:3px;box-shadow:0 1px 0 rgba(255,255,255,.12);"></div><svg style="left:113.0px;top:382.6px;opacity:1" width="6.4" height="7" viewBox="0 0 6.4 7"><path d="M6.4 0v7L0 3.5z" fill="#d0d0d0"/></svg><svg style="left:232.5px;top:382.6px;opacity:1" width="6.4" height="7" viewBox="0 0 6.4 7"><path d="M0 0v7l6.4-3.5z" fill="#d0d0d0"/></svg><span class="t" style="left:150.66px;top:379.40px;font-size:11px;line-height:14px;color:#f0a010;letter-spacing:-0.202px;">29280.809</span><div style="left:60px;top:402.5px;width:188px;height:45.5px;background:linear-gradient(180deg,#4c4c4c 0px,#5b5b5b 16px,#5b5b5b 100%);border:1px solid #202020;border-radius:5px 5px 5px 1px;"></div><div style="left:54px;top:403px;width:22px;height:20px;background:linear-gradient(180deg,#9bb8d8 0%,#5a7896 30%,#5a7896 100%);border-radius:5.5px;box-shadow:0 0 0 1px rgba(20,20,20,.6);"></div><div style="left:55.200000000000045px;top:404.2px;width:19.6px;height:17.6px;background:#5a7896;border-radius:4.5px;"></div><div style="left:57.59999999999991px;top:406.2px;width:14.8px;height:13.6px;background:linear-gradient(180deg,#4a4a4a,#5c5c5c);border:1px solid #d0d4d4;border-radius:1.5px;box-shadow:0 0 0 1px rgba(30,30,30,.55);"></div><svg style="left:59.0px;top:408.0px;opacity:1" width="12" height="10" viewBox="0 0 12 10"><path d="M0.800 7.600h4L8 2.800h3.600" fill="none" stroke="#b4ccf6" stroke-width="1.700" stroke-linejoin="round"/></svg><svg style="left:80.7px;top:409.0px;opacity:1" width="8.6" height="8.8" viewBox="0 0 8.6 8.8"><path d="M0 0h8.6L4.3 8.8z" fill="#fff"/></svg><span class="t" style="left:98.50px;top:406.30px;font-size:11px;line-height:14px;color:#dcdcdc;">N...</span><div style="left:119px;top:405.5px;width:106px;height:15px;background:linear-gradient(180deg,#2d2d2d 0%,#232323 50%,#191919 100%);border-radius:4px;box-shadow:0 1px 0 rgba(255,255,255,.13),inset 0 1px 1px rgba(0,0,0,.5);"></div><span class="t" style="left:125.50px;top:406.30px;font-size:11px;line-height:14px;color:#e9e9e9;letter-spacing:-0.280px;">Float Value</span><svg style="left:215.5px;top:413.6px;opacity:1" width="6" height="4.4" viewBox="0 0 6 4.4"><path d="M0 0h6L3.0 4.4z" fill="#c8c8c8"/></svg><div style="left:229px;top:406px;width:14.5px;height:14px;background:linear-gradient(180deg,#2d2d2d,#1a1a1a);border-radius:3px;box-shadow:0 1px 0 rgba(255,255,255,.13);"></div><svg style="left:231.0px;top:408.0px;opacity:1" width="11" height="10" viewBox="0 0 11 10"><path d="M1.500 8.500Q8.500 8.500 9.200 1" fill="none" stroke="#f0f0f0" stroke-width="1.300"/></svg><div style="left:108px;top:428.5px;width:135.5px;height:15px;background:linear-gradient(180deg,#111 0%,#1e1e1e 50%,#2b2b2b 100%);border-radius:3px;box-shadow:0 1px 0 rgba(255,255,255,.12);"></div><svg style="left:113.0px;top:432.6px;opacity:1" width="6.4" height="7" viewBox="0 0 6.4 7"><path d="M6.4 0v7L0 3.5z" fill="#d0d0d0"/></svg><svg style="left:232.5px;top:432.6px;opacity:1" width="6.4" height="7" viewBox="0 0 6.4 7"><path d="M0 0v7l6.4-3.5z" fill="#d0d0d0"/></svg><span class="t" style="left:172.79px;top:429.40px;font-size:11px;line-height:14px;color:#f0f0f0;letter-spacing:-0.214px;">0</span><div style="left:60px;top:452.5px;width:188px;height:64.5px;background:linear-gradient(180deg,#4c4c4c 0px,#5b5b5b 16px,#5b5b5b 100%);border:1px solid #202020;border-radius:5px 5px 5px 1px;"></div><div style="left:54px;top:453px;width:22px;height:20px;background:linear-gradient(180deg,#9bb8d8 0%,#5a7896 30%,#5a7896 100%);border-radius:5.5px;box-shadow:0 0 0 1px rgba(20,20,20,.6);"></div><div style="left:55.200000000000045px;top:454.2px;width:19.6px;height:17.6px;background:#5a7896;border-radius:4.5px;"></div><div style="left:57.59999999999991px;top:456.2px;width:14.8px;height:13.6px;background:linear-gradient(180deg,#4a4a4a,#5c5c5c);border:1px solid #d0d4d4;border-radius:1.5px;box-shadow:0 0 0 1px rgba(30,30,30,.55);"></div><svg style="left:59.0px;top:458.0px;opacity:1" width="12" height="10" viewBox="0 0 12 10"><path d="M0.800 7.600h4L8 2.800h3.600" fill="none" stroke="#b4ccf6" stroke-width="1.700" stroke-linejoin="round"/></svg><svg style="left:80.7px;top:459.0px;opacity:1" width="8.6" height="8.8" viewBox="0 0 8.6 8.8"><path d="M0 0h8.6L4.3 8.8z" fill="#fff"/></svg><span class="t" style="left:98.50px;top:456.30px;font-size:11px;line-height:14px;color:#dcdcdc;transform:scaleX(0.76);transform-origin:0 50%;">Lens shift</span><div style="left:139px;top:455.5px;width:106px;height:15px;background:linear-gradient(180deg,#2d2d2d 0%,#232323 50%,#191919 100%);border-radius:4px;box-shadow:0 1px 0 rgba(255,255,255,.13),inset 0 1px 1px rgba(0,0,0,.5);"></div><span class="t" style="left:145.50px;top:456.30px;font-size:11px;line-height:14px;color:#e9e9e9;letter-spacing:-0.280px;">Float Value</span><svg style="left:235.5px;top:463.6px;opacity:1" width="6" height="4.4" viewBox="0 0 6 4.4"><path d="M0 0h6L3.0 4.4z" fill="#c8c8c8"/></svg><span class="t" style="left:93.03px;top:479.30px;font-size:11px;line-height:14px;color:#e4e4e4;">X</span><div style="left:108px;top:478.5px;width:135.5px;height:15px;background:linear-gradient(180deg,#111 0%,#1e1e1e 50%,#2b2b2b 100%);border-radius:3px;box-shadow:0 1px 0 rgba(255,255,255,.12);"></div><div style="left:108px;top:478.5px;width:67.75px;height:15px;background:linear-gradient(180deg,rgba(0,0,0,.25),rgba(0,0,0,.5));border-radius:3px 0 0 3px;"></div><svg style="left:113.0px;top:482.6px;opacity:1" width="6.4" height="7" viewBox="0 0 6.4 7"><path d="M6.4 0v7L0 3.5z" fill="#d0d0d0"/></svg><svg style="left:232.5px;top:482.6px;opacity:1" width="6.4" height="7" viewBox="0 0 6.4 7"><path d="M0 0v7l6.4-3.5z" fill="#d0d0d0"/></svg><span class="t" style="left:172.79px;top:479.40px;font-size:11px;line-height:14px;color:#f0f0f0;letter-spacing:-0.214px;">0</span><span class="t" style="left:93.03px;top:498.30px;font-size:11px;line-height:14px;color:#e4e4e4;">Y</span><div style="left:108px;top:497.5px;width:135.5px;height:15px;background:linear-gradient(180deg,#111 0%,#1e1e1e 50%,#2b2b2b 100%);border-radius:3px;box-shadow:0 1px 0 rgba(255,255,255,.12);"></div><div style="left:108px;top:497.5px;width:67.75px;height:15px;background:linear-gradient(180deg,rgba(0,0,0,.25),rgba(0,0,0,.5));border-radius:3px 0 0 3px;"></div><svg style="left:113.0px;top:501.6px;opacity:1" width="6.4" height="7" viewBox="0 0 6.4 7"><path d="M6.4 0v7L0 3.5z" fill="#d0d0d0"/></svg><svg style="left:232.5px;top:501.6px;opacity:1" width="6.4" height="7" viewBox="0 0 6.4 7"><path d="M0 0v7l6.4-3.5z" fill="#d0d0d0"/></svg><span class="t" style="left:172.79px;top:498.40px;font-size:11px;line-height:14px;color:#f0f0f0;letter-spacing:-0.214px;">0</span><div style="left:60px;top:521.5px;width:188px;height:45.5px;background:linear-gradient(180deg,#4c4c4c 0px,#5b5b5b 16px,#5b5b5b 100%);border:1px solid #202020;border-radius:5px 5px 5px 1px;"></div><div style="left:54px;top:522px;width:22px;height:20px;background:linear-gradient(180deg,#9bb8d8 0%,#5a7896 30%,#5a7896 100%);border-radius:5.5px;box-shadow:0 0 0 1px rgba(20,20,20,.6);"></div><div style="left:55.200000000000045px;top:523.2px;width:19.6px;height:17.6px;background:#5a7896;border-radius:4.5px;"></div><div style="left:57.59999999999991px;top:525.2px;width:14.8px;height:13.6px;background:linear-gradient(180deg,#4a4a4a,#5c5c5c);border:1px solid #d0d4d4;border-radius:1.5px;box-shadow:0 0 0 1px rgba(30,30,30,.55);"></div><svg style="left:59.0px;top:527.0px;opacity:1" width="12" height="10" viewBox="0 0 12 10"><path d="M0.800 7.600h4L8 2.800h3.600" fill="none" stroke="#b4ccf6" stroke-width="1.700" stroke-linejoin="round"/></svg><svg style="left:80.7px;top:528.0px;opacity:1" width="8.6" height="8.8" viewBox="0 0 8.6 8.8"><path d="M0 0h8.6L4.3 8.8z" fill="#fff"/></svg><span class="t" style="left:98.50px;top:525.30px;font-size:11px;line-height:14px;color:#dcdcdc;transform:scaleX(0.76);transform-origin:0 50%;">Distortion</span><div style="left:139px;top:524.5px;width:106px;height:15px;background:linear-gradient(180deg,#2d2d2d 0%,#232323 50%,#191919 100%);border-radius:4px;box-shadow:0 1px 0 rgba(255,255,255,.13),inset 0 1px 1px rgba(0,0,0,.5);"></div><span class="t" style="left:145.50px;top:525.30px;font-size:11px;line-height:14px;color:#e9e9e9;letter-spacing:-0.280px;">Float Value</span><svg style="left:235.5px;top:532.6px;opacity:1" width="6" height="4.4" viewBox="0 0 6 4.4"><path d="M0 0h6L3.0 4.4z" fill="#c8c8c8"/></svg><div style="left:108px;top:547.5px;width:135.5px;height:15px;background:linear-gradient(180deg,#111 0%,#1e1e1e 50%,#2b2b2b 100%);border-radius:3px;box-shadow:0 1px 0 rgba(255,255,255,.12);"></div><svg style="left:113.0px;top:551.6px;opacity:1" width="6.4" height="7" viewBox="0 0 6.4 7"><path d="M6.4 0v7L0 3.5z" fill="#d0d0d0"/></svg><svg style="left:232.5px;top:551.6px;opacity:1" width="6.4" height="7" viewBox="0 0 6.4 7"><path d="M0 0v7l6.4-3.5z" fill="#d0d0d0"/></svg><span class="t" style="left:172.79px;top:548.40px;font-size:11px;line-height:14px;color:#f0f0f0;letter-spacing:-0.214px;">0</span><div style="left:60px;top:571.5px;width:188px;height:83.5px;background:linear-gradient(180deg,#4c4c4c 0px,#5b5b5b 16px,#5b5b5b 100%);border:1px solid #202020;border-radius:5px 5px 5px 1px;"></div><div style="left:54px;top:572px;width:22px;height:20px;background:linear-gradient(180deg,#9bb8d8 0%,#5a7896 30%,#5a7896 100%);border-radius:5.5px;box-shadow:0 0 0 1px rgba(20,20,20,.6);"></div><div style="left:55.200000000000045px;top:573.2px;width:19.6px;height:17.6px;background:#5a7896;border-radius:4.5px;"></div><div style="left:57.59999999999991px;top:575.2px;width:14.8px;height:13.6px;background:linear-gradient(180deg,#4a4a4a,#5c5c5c);border:1px solid #d0d4d4;border-radius:1.5px;box-shadow:0 0 0 1px rgba(30,30,30,.55);"></div><svg style="left:59.0px;top:577.0px;opacity:1" width="12" height="10" viewBox="0 0 12 10"><path d="M0.800 7.600h4L8 2.800h3.600" fill="none" stroke="#b4ccf6" stroke-width="1.700" stroke-linejoin="round"/></svg><svg style="left:80.7px;top:578.0px;opacity:1" width="8.6" height="8.8" viewBox="0 0 8.6 8.8"><path d="M0 0h8.6L4.3 8.8z" fill="#fff"/></svg><span class="t" style="left:98.50px;top:575.30px;font-size:11px;line-height:14px;color:#dcdcdc;transform:scaleX(0.9);transform-origin:0 50%;">Position</span><div style="left:139px;top:574.5px;width:106px;height:15px;background:linear-gradient(180deg,#2d2d2d 0%,#232323 50%,#191919 100%);border-radius:4px;box-shadow:0 1px 0 rgba(255,255,255,.13),inset 0 1px 1px rgba(0,0,0,.5);"></div><span class="t" style="left:145.50px;top:575.30px;font-size:11px;line-height:14px;color:#e9e9e9;letter-spacing:-0.280px;">Float Value</span><svg style="left:235.5px;top:582.6px;opacity:1" width="6" height="4.4" viewBox="0 0 6 4.4"><path d="M0 0h6L3.0 4.4z" fill="#c8c8c8"/></svg><span class="t" style="left:93.03px;top:598.30px;font-size:11px;line-height:14px;color:#e4e4e4;">X</span><div style="left:108px;top:597.5px;width:135.5px;height:15px;background:linear-gradient(180deg,#111 0%,#1e1e1e 50%,#2b2b2b 100%);border-radius:3px;box-shadow:0 1px 0 rgba(255,255,255,.12);"></div><svg style="left:113.0px;top:601.6px;opacity:1" width="6.4" height="7" viewBox="0 0 6.4 7"><path d="M6.4 0v7L0 3.5z" fill="#d0d0d0"/></svg><svg style="left:232.5px;top:601.6px;opacity:1" width="6.4" height="7" viewBox="0 0 6.4 7"><path d="M0 0v7l6.4-3.5z" fill="#d0d0d0"/></svg><span class="t" style="left:148.89px;top:598.40px;font-size:11px;line-height:14px;color:#f0f0f0;letter-spacing:-0.195px;">-0.8639166</span><span class="t" style="left:93.03px;top:617.30px;font-size:11px;line-height:14px;color:#e4e4e4;">Y</span><div style="left:108px;top:616.5px;width:135.5px;height:15px;background:linear-gradient(180deg,#111 0%,#1e1e1e 50%,#2b2b2b 100%);border-radius:3px;box-shadow:0 1px 0 rgba(255,255,255,.12);"></div><svg style="left:113.0px;top:620.6px;opacity:1" width="6.4" height="7" viewBox="0 0 6.4 7"><path d="M6.4 0v7L0 3.5z" fill="#d0d0d0"/></svg><svg style="left:232.5px;top:620.6px;opacity:1" width="6.4" height="7" viewBox="0 0 6.4 7"><path d="M0 0v7l6.4-3.5z" fill="#d0d0d0"/></svg><span class="t" style="left:148.89px;top:617.40px;font-size:11px;line-height:14px;color:#f0f0f0;letter-spacing:-0.195px;">-0.2205731</span><span class="t" style="left:93.33px;top:636.30px;font-size:11px;line-height:14px;color:#e4e4e4;">Z</span><div style="left:108px;top:635.5px;width:135.5px;height:15px;background:linear-gradient(180deg,#111 0%,#1e1e1e 50%,#2b2b2b 100%);border-radius:3px;box-shadow:0 1px 0 rgba(255,255,255,.12);"></div><svg style="left:113.0px;top:639.6px;opacity:1" width="6.4" height="7" viewBox="0 0 6.4 7"><path d="M6.4 0v7L0 3.5z" fill="#d0d0d0"/></svg><svg style="left:232.5px;top:639.6px;opacity:1" width="6.4" height="7" viewBox="0 0 6.4 7"><path d="M0 0v7l6.4-3.5z" fill="#d0d0d0"/></svg><span class="t" style="left:148.89px;top:636.40px;font-size:11px;line-height:14px;color:#f0f0f0;letter-spacing:-0.195px;">-1.4628463</span><div style="left:60px;top:659.5px;width:188px;height:83.5px;background:linear-gradient(180deg,#4c4c4c 0px,#5b5b5b 16px,#5b5b5b 100%);border:1px solid #202020;border-radius:5px 5px 5px 1px;"></div><div style="left:54px;top:660px;width:22px;height:20px;background:linear-gradient(180deg,#9bb8d8 0%,#5a7896 30%,#5a7896 100%);border-radius:5.5px;box-shadow:0 0 0 1px rgba(20,20,20,.6);"></div><div style="left:55.200000000000045px;top:661.2px;width:19.6px;height:17.6px;background:#5a7896;border-radius:4.5px;"></div><div style="left:57.59999999999991px;top:663.2px;width:14.8px;height:13.6px;background:linear-gradient(180deg,#4a4a4a,#5c5c5c);border:1px solid #d0d4d4;border-radius:1.5px;box-shadow:0 0 0 1px rgba(30,30,30,.55);"></div><svg style="left:59.0px;top:665.0px;opacity:1" width="12" height="10" viewBox="0 0 12 10"><path d="M0.800 7.600h4L8 2.800h3.600" fill="none" stroke="#b4ccf6" stroke-width="1.700" stroke-linejoin="round"/></svg><svg style="left:80.7px;top:666.0px;opacity:1" width="8.6" height="8.8" viewBox="0 0 8.6 8.8"><path d="M0 0h8.6L4.3 8.8z" fill="#fff"/></svg><span class="t" style="left:98.50px;top:663.30px;font-size:11px;line-height:14px;color:#dcdcdc;">Target</span><div style="left:139px;top:662.5px;width:106px;height:15px;background:linear-gradient(180deg,#2d2d2d 0%,#232323 50%,#191919 100%);border-radius:4px;box-shadow:0 1px 0 rgba(255,255,255,.13),inset 0 1px 1px rgba(0,0,0,.5);"></div><span class="t" style="left:145.50px;top:663.30px;font-size:11px;line-height:14px;color:#e9e9e9;letter-spacing:-0.280px;">Float Value</span><svg style="left:235.5px;top:670.6px;opacity:1" width="6" height="4.4" viewBox="0 0 6 4.4"><path d="M0 0h6L3.0 4.4z" fill="#c8c8c8"/></svg><span class="t" style="left:93.03px;top:686.30px;font-size:11px;line-height:14px;color:#e4e4e4;">X</span><div style="left:108px;top:685.5px;width:135.5px;height:15px;background:linear-gradient(180deg,#111 0%,#1e1e1e 50%,#2b2b2b 100%);border-radius:3px;box-shadow:0 1px 0 rgba(255,255,255,.12);"></div><svg style="left:113.0px;top:689.6px;opacity:1" width="6.4" height="7" viewBox="0 0 6.4 7"><path d="M6.4 0v7L0 3.5z" fill="#d0d0d0"/></svg><svg style="left:232.5px;top:689.6px;opacity:1" width="6.4" height="7" viewBox="0 0 6.4 7"><path d="M0 0v7l6.4-3.5z" fill="#d0d0d0"/></svg><span class="t" style="left:148.89px;top:686.40px;font-size:11px;line-height:14px;color:#f0f0f0;letter-spacing:-0.195px;">-0.0208986</span><span class="t" style="left:93.03px;top:705.30px;font-size:11px;line-height:14px;color:#e4e4e4;">Y</span><div style="left:108px;top:704.5px;width:135.5px;height:15px;background:linear-gradient(180deg,#111 0%,#1e1e1e 50%,#2b2b2b 100%);border-radius:3px;box-shadow:0 1px 0 rgba(255,255,255,.12);"></div><svg style="left:113.0px;top:708.6px;opacity:1" width="6.4" height="7" viewBox="0 0 6.4 7"><path d="M6.4 0v7L0 3.5z" fill="#d0d0d0"/></svg><svg style="left:232.5px;top:708.6px;opacity:1" width="6.4" height="7" viewBox="0 0 6.4 7"><path d="M0 0v7l6.4-3.5z" fill="#d0d0d0"/></svg><span class="t" style="left:160.69px;top:705.40px;font-size:11px;line-height:14px;color:#f0f0f0;letter-spacing:-0.182px;">-0.000</span><span class="t" style="left:93.33px;top:724.30px;font-size:11px;line-height:14px;color:#e4e4e4;">Z</span><div style="left:108px;top:723.5px;width:135.5px;height:15px;background:linear-gradient(180deg,#111 0%,#1e1e1e 50%,#2b2b2b 100%);border-radius:3px;box-shadow:0 1px 0 rgba(255,255,255,.12);"></div><svg style="left:113.0px;top:727.6px;opacity:1" width="6.4" height="7" viewBox="0 0 6.4 7"><path d="M6.4 0v7L0 3.5z" fill="#d0d0d0"/></svg><svg style="left:232.5px;top:727.6px;opacity:1" width="6.4" height="7" viewBox="0 0 6.4 7"><path d="M0 0v7l6.4-3.5z" fill="#d0d0d0"/></svg><span class="t" style="left:148.89px;top:724.40px;font-size:11px;line-height:14px;color:#f0f0f0;letter-spacing:-0.195px;">-0.9722666</span><div style="left:60px;top:747.5px;width:188px;height:83.5px;background:linear-gradient(180deg,#4c4c4c 0px,#5b5b5b 16px,#5b5b5b 100%);border:1px solid #202020;border-radius:5px 5px 5px 1px;"></div><div style="left:54px;top:748px;width:22px;height:20px;background:linear-gradient(180deg,#9bb8d8 0%,#5a7896 30%,#5a7896 100%);border-radius:5.5px;box-shadow:0 0 0 1px rgba(20,20,20,.6);"></div><div style="left:55.200000000000045px;top:749.2px;width:19.6px;height:17.6px;background:#5a7896;border-radius:4.5px;"></div><div style="left:57.59999999999991px;top:751.2px;width:14.8px;height:13.6px;background:linear-gradient(180deg,#4a4a4a,#5c5c5c);border:1px solid #d0d4d4;border-radius:1.5px;box-shadow:0 0 0 1px rgba(30,30,30,.55);"></div><svg style="left:59.0px;top:753.0px;opacity:1" width="12" height="10" viewBox="0 0 12 10"><path d="M0.800 7.600h4L8 2.800h3.600" fill="none" stroke="#b4ccf6" stroke-width="1.700" stroke-linejoin="round"/></svg><svg style="left:80.7px;top:754.0px;opacity:1" width="8.6" height="8.8" viewBox="0 0 8.6 8.8"><path d="M0 0h8.6L4.3 8.8z" fill="#fff"/></svg><span class="t" style="left:98.50px;top:751.30px;font-size:11px;line-height:14px;color:#dcdcdc;transform:scaleX(0.76);transform-origin:0 50%;">Up-vector</span><div style="left:139px;top:750.5px;width:106px;height:15px;background:linear-gradient(180deg,#2d2d2d 0%,#232323 50%,#191919 100%);border-radius:4px;box-shadow:0 1px 0 rgba(255,255,255,.13),inset 0 1px 1px rgba(0,0,0,.5);"></div><span class="t" style="left:145.50px;top:751.30px;font-size:11px;line-height:14px;color:#e9e9e9;letter-spacing:-0.280px;">Float Value</span><svg style="left:235.5px;top:758.6px;opacity:1" width="6" height="4.4" viewBox="0 0 6 4.4"><path d="M0 0h6L3.0 4.4z" fill="#c8c8c8"/></svg><span class="t" style="left:93.03px;top:774.30px;font-size:11px;line-height:14px;color:#e4e4e4;">X</span><div style="left:108px;top:773.5px;width:135.5px;height:15px;background:linear-gradient(180deg,#111 0%,#1e1e1e 50%,#2b2b2b 100%);border-radius:3px;box-shadow:0 1px 0 rgba(255,255,255,.12);"></div><div style="left:108px;top:773.5px;width:67.75px;height:15px;background:linear-gradient(180deg,rgba(0,0,0,.25),rgba(0,0,0,.5));border-radius:3px 0 0 3px;"></div><svg style="left:113.0px;top:777.6px;opacity:1" width="6.4" height="7" viewBox="0 0 6.4 7"><path d="M6.4 0v7L0 3.5z" fill="#d0d0d0"/></svg><svg style="left:232.5px;top:777.6px;opacity:1" width="6.4" height="7" viewBox="0 0 6.4 7"><path d="M0 0v7l6.4-3.5z" fill="#d0d0d0"/></svg><span class="t" style="left:172.79px;top:774.40px;font-size:11px;line-height:14px;color:#f0f0f0;letter-spacing:-0.214px;">0</span><span class="t" style="left:93.03px;top:793.30px;font-size:11px;line-height:14px;color:#e4e4e4;">Y</span><div style="left:108px;top:792.5px;width:135.5px;height:15px;background:linear-gradient(180deg,#111 0%,#1e1e1e 50%,#2b2b2b 100%);border-radius:3px;box-shadow:0 1px 0 rgba(255,255,255,.12);"></div><svg style="left:113.0px;top:796.6px;opacity:1" width="6.4" height="7" viewBox="0 0 6.4 7"><path d="M6.4 0v7L0 3.5z" fill="#d0d0d0"/></svg><svg style="left:232.5px;top:796.6px;opacity:1" width="6.4" height="7" viewBox="0 0 6.4 7"><path d="M0 0v7l6.4-3.5z" fill="#d0d0d0"/></svg><span class="t" style="left:162.47px;top:793.40px;font-size:11px;line-height:14px;color:#f0f0f0;letter-spacing:-0.193px;">1.000</span><span class="t" style="left:93.33px;top:812.30px;font-size:11px;line-height:14px;color:#e4e4e4;">Z</span><div style="left:108px;top:811.5px;width:135.5px;height:15px;background:linear-gradient(180deg,#111 0%,#1e1e1e 50%,#2b2b2b 100%);border-radius:3px;box-shadow:0 1px 0 rgba(255,255,255,.12);"></div><div style="left:108px;top:811.5px;width:67.75px;height:15px;background:linear-gradient(180deg,rgba(0,0,0,.25),rgba(0,0,0,.5));border-radius:3px 0 0 3px;"></div><svg style="left:113.0px;top:815.6px;opacity:1" width="6.4" height="7" viewBox="0 0 6.4 7"><path d="M6.4 0v7L0 3.5z" fill="#d0d0d0"/></svg><svg style="left:232.5px;top:815.6px;opacity:1" width="6.4" height="7" viewBox="0 0 6.4 7"><path d="M0 0v7l6.4-3.5z" fill="#d0d0d0"/></svg><span class="t" style="left:172.79px;top:812.40px;font-size:11px;line-height:14px;color:#f0f0f0;letter-spacing:-0.214px;">0</span><div style="left:60px;top:835.5px;width:188px;height:45.5px;background:linear-gradient(180deg,#4c4c4c 0px,#5b5b5b 16px,#5b5b5b 100%);border:1px solid #202020;border-radius:5px 5px 5px 1px;"></div><div style="left:54px;top:836px;width:22px;height:20px;background:linear-gradient(180deg,#c4a6c4 0%,#96799a 30%,#96799a 100%);border-radius:5.5px;box-shadow:0 0 0 1px rgba(20,20,20,.6);"></div><div style="left:55.200000000000045px;top:837.2px;width:19.6px;height:17.6px;background:#96799a;border-radius:4.5px;"></div><div style="left:57.59999999999991px;top:839.2px;width:14.8px;height:13.6px;background:#3b4444;border:1px solid #d0d4d4;border-radius:1.5px;box-shadow:0 0 0 1px rgba(30,30,30,.55);"></div><svg style="left:59.7px;top:842.6px;opacity:1" width="10.8" height="6.6" viewBox="0 0 10.8 6.6"><path d="M0 3.300h3.900M6.900 3.300h3.900" stroke="#f49ae8" stroke-width="1.700"/><path d="M3.900 0v6.600M6.900 0v6.600" stroke="#f8c8f0" stroke-width="1"/></svg><svg style="left:80.7px;top:842.0px;opacity:1" width="8.6" height="8.8" viewBox="0 0 8.6 8.8"><path d="M0 0h8.6L4.3 8.8z" fill="#fff"/></svg><span class="t" style="left:98.50px;top:839.30px;font-size:11px;line-height:14px;color:#dcdcdc;transform:scaleX(0.74);transform-origin:0 50%;">Perspe...</span><div style="left:139px;top:838.5px;width:106px;height:15px;background:linear-gradient(180deg,#2d2d2d 0%,#232323 50%,#191919 100%);border-radius:4px;box-shadow:0 1px 0 rgba(255,255,255,.13),inset 0 1px 1px rgba(0,0,0,.5);"></div><span class="t" style="left:145.50px;top:839.30px;font-size:11px;line-height:14px;color:#e9e9e9;letter-spacing:-0.364px;">Bool Value</span><svg style="left:235.5px;top:846.6px;opacity:1" width="6" height="4.4" viewBox="0 0 6 4.4"><path d="M0 0h6L3.0 4.4z" fill="#c8c8c8"/></svg><div style="left:108px;top:861.5px;width:15.5px;height:15.5px;background:linear-gradient(180deg,#2a2a2a,#222);border-radius:3.5px;box-shadow:0 1px 0 rgba(255,255,255,.16),inset 0 1px 1px rgba(0,0,0,.6);"></div><span class="t" style="left:129.00px;top:862.30px;font-size:11px;line-height:14px;color:#e4e4e4;letter-spacing:-0.554px;">Enabled</span><div style="left:60px;top:885.5px;width:188px;height:45.5px;background:linear-gradient(180deg,#4c4c4c 0px,#5b5b5b 16px,#5b5b5b 100%);border:1px solid #202020;border-radius:5px 5px 5px 1px;"></div><div style="left:54px;top:886px;width:22px;height:20px;background:linear-gradient(180deg,#cfcfcf 0%,#8a8a8a 30%,#8a8a8a 100%);border-radius:5.5px;box-shadow:0 0 0 1px rgba(20,20,20,.6);"></div><div style="left:55.200000000000045px;top:887.2px;width:19.6px;height:17.6px;background:#8a8a8a;border-radius:4.5px;"></div><div style="left:57.59999999999991px;top:889.2px;width:14.8px;height:13.6px;background:linear-gradient(180deg,#444,#555);border:1px solid #d0d4d4;border-radius:1.5px;box-shadow:0 0 0 1px rgba(30,30,30,.55);"></div><svg style="left:59.0px;top:891.5px;opacity:1" width="12" height="9" viewBox="0 0 12 9"><rect x="0" y="3.400" width="12" height="2.200" fill="#f0e070"/></svg><svg style="left:80.7px;top:892.0px;opacity:1" width="8.6" height="8.8" viewBox="0 0 8.6 8.8"><path d="M0 0h8.6L4.3 8.8z" fill="#fff"/></svg><span class="t" style="left:98.50px;top:889.30px;font-size:11px;line-height:14px;color:#dcdcdc;transform:scaleX(0.74);transform-origin:0 50%;">Stereo ...</span><div style="left:139px;top:888.5px;width:106px;height:15px;background:linear-gradient(180deg,#2d2d2d 0%,#232323 50%,#191919 100%);border-radius:4px;box-shadow:0 1px 0 rgba(255,255,255,.13),inset 0 1px 1px rgba(0,0,0,.5);"></div><span class="t" style="left:145.50px;top:889.30px;font-size:11px;line-height:14px;color:#e9e9e9;letter-spacing:-0.341px;">Enum Value</span><svg style="left:235.5px;top:896.6px;opacity:1" width="6" height="4.4" viewBox="0 0 6 4.4"><path d="M0 0h6L3.0 4.4z" fill="#c8c8c8"/></svg><div style="left:108px;top:911.5px;width:136px;height:15px;background:linear-gradient(180deg,#2d2d2d 0%,#232323 50%,#191919 100%);border-radius:4px;box-shadow:0 1px 0 rgba(255,255,255,.13),inset 0 1px 1px rgba(0,0,0,.5);"></div><span class="t" style="left:114.50px;top:912.30px;font-size:11px;line-height:14px;color:#e9e9e9;letter-spacing:-0.208px;">no stereo</span><svg style="left:234.5px;top:919.6px;opacity:1" width="6" height="4.4" viewBox="0 0 6 4.4"><path d="M0 0h6L3.0 4.4z" fill="#c8c8c8"/></svg><div style="left:60px;top:935.5px;width:188px;height:45.5px;background:linear-gradient(180deg,#4c4c4c 0px,#5b5b5b 16px,#5b5b5b 100%);border:1px solid #202020;border-radius:5px 5px 5px 1px;"></div><div style="left:54px;top:936px;width:22px;height:20px;background:linear-gradient(180deg,#cfcfcf 0%,#8a8a8a 30%,#8a8a8a 100%);border-radius:5.5px;box-shadow:0 0 0 1px rgba(20,20,20,.6);"></div><div style="left:55.200000000000045px;top:937.2px;width:19.6px;height:17.6px;background:#8a8a8a;border-radius:4.5px;"></div><div style="left:57.59999999999991px;top:939.2px;width:14.8px;height:13.6px;background:linear-gradient(180deg,#444,#555);border:1px solid #d0d4d4;border-radius:1.5px;box-shadow:0 0 0 1px rgba(30,30,30,.55);"></div><svg style="left:59.0px;top:941.5px;opacity:1" width="12" height="9" viewBox="0 0 12 9"><rect x="0" y="3.400" width="12" height="2.200" fill="#f0e070"/></svg><svg style="left:80.7px;top:942.0px;opacity:1" width="8.6" height="8.8" viewBox="0 0 8.6 8.8"><path d="M0 0h8.6L4.3 8.8z" fill="#fff"/></svg><span class="t" style="left:98.50px;top:939.30px;font-size:11px;line-height:14px;color:#dcdcdc;transform:scaleX(0.74);transform-origin:0 50%;">Stereo ...</span><div style="left:139px;top:938.5px;width:106px;height:15px;background:linear-gradient(180deg,#2d2d2d 0%,#232323 50%,#191919 100%);border-radius:4px;box-shadow:0 1px 0 rgba(255,255,255,.13),inset 0 1px 1px rgba(0,0,0,.5);"></div><span class="t" style="left:145.50px;top:939.30px;font-size:11px;line-height:14px;color:#e9e9e9;letter-spacing:-0.341px;">Enum Value</span><svg style="left:235.5px;top:946.6px;opacity:1" width="6" height="4.4" viewBox="0 0 6 4.4"><path d="M0 0h6L3.0 4.4z" fill="#c8c8c8"/></svg><div style="left:108px;top:961.5px;width:136px;height:15px;background:linear-gradient(180deg,#2d2d2d 0%,#232323 50%,#191919 100%);border-radius:4px;box-shadow:0 1px 0 rgba(255,255,255,.13),inset 0 1px 1px rgba(0,0,0,.5);"></div><span class="t" style="left:114.50px;top:962.30px;font-size:11px;line-height:14px;color:#e9e9e9;letter-spacing:-0.349px;">Side-by-Side</span><svg style="left:234.5px;top:969.6px;opacity:1" width="6" height="4.4" viewBox="0 0 6 4.4"><path d="M0 0h6L3.0 4.4z" fill="#c8c8c8"/></svg><div style="left:60px;top:985.5px;width:188px;height:45.5px;background:linear-gradient(180deg,#4c4c4c 0px,#5b5b5b 16px,#5b5b5b 100%);border:1px solid #202020;border-radius:5px 5px 5px 1px;"></div><div style="left:54px;top:986px;width:22px;height:20px;background:linear-gradient(180deg,#9bb8d8 0%,#5a7896 30%,#5a7896 100%);border-radius:5.5px;box-shadow:0 0 0 1px rgba(20,20,20,.6);"></div><div style="left:55.200000000000045px;top:987.2px;width:19.6px;height:17.6px;background:#5a7896;border-radius:4.5px;"></div><div style="left:57.59999999999991px;top:989.2px;width:14.8px;height:13.6px;background:linear-gradient(180deg,#4a4a4a,#5c5c5c);border:1px solid #d0d4d4;border-radius:1.5px;box-shadow:0 0 0 1px rgba(30,30,30,.55);"></div><svg style="left:59.0px;top:991.0px;opacity:1" width="12" height="10" viewBox="0 0 12 10"><path d="M0.800 7.600h4L8 2.800h3.600" fill="none" stroke="#b4ccf6" stroke-width="1.700" stroke-linejoin="round"/></svg><svg style="left:80.7px;top:992.0px;opacity:1" width="8.6" height="8.8" viewBox="0 0 8.6 8.8"><path d="M0 0h8.6L4.3 8.8z" fill="#fff"/></svg><span class="t" style="left:98.50px;top:989.30px;font-size:11px;line-height:14px;color:#dcdcdc;">E...</span><div style="left:119px;top:988.5px;width:106px;height:15px;background:linear-gradient(180deg,#2d2d2d 0%,#232323 50%,#191919 100%);border-radius:4px;box-shadow:0 1px 0 rgba(255,255,255,.13),inset 0 1px 1px rgba(0,0,0,.5);"></div><span class="t" style="left:125.50px;top:989.30px;font-size:11px;line-height:14px;color:#e9e9e9;letter-spacing:-0.280px;">Float Value</span><svg style="left:215.5px;top:996.6px;opacity:1" width="6" height="4.4" viewBox="0 0 6 4.4"><path d="M0 0h6L3.0 4.4z" fill="#c8c8c8"/></svg><div style="left:229px;top:989px;width:14.5px;height:14px;background:linear-gradient(180deg,#2d2d2d,#1a1a1a);border-radius:3px;box-shadow:0 1px 0 rgba(255,255,255,.13);"></div><svg style="left:231.0px;top:991.0px;opacity:1" width="11" height="10" viewBox="0 0 11 10"><path d="M1.500 8.500Q8.500 8.500 9.200 1" fill="none" stroke="#f0f0f0" stroke-width="1.300"/></svg><div style="left:108px;top:1011.5px;width:135.5px;height:15px;background:linear-gradient(180deg,#111 0%,#1e1e1e 50%,#2b2b2b 100%);border-radius:3px;box-shadow:0 1px 0 rgba(255,255,255,.12);"></div><svg style="left:113.0px;top:1015.6px;opacity:1" width="6.4" height="7" viewBox="0 0 6.4 7"><path d="M6.4 0v7L0 3.5z" fill="#d0d0d0"/></svg><svg style="left:232.5px;top:1015.6px;opacity:1" width="6.4" height="7" viewBox="0 0 6.4 7"><path d="M0 0v7l6.4-3.5z" fill="#d0d0d0"/></svg><span class="t" style="left:162.47px;top:1012.40px;font-size:11px;line-height:14px;color:#f0f0f0;letter-spacing:-0.193px;">0.065</span><div style="left:60px;top:1035.5px;width:188px;height:80px;background:linear-gradient(180deg,#4c4c4c 0px,#5b5b5b 16px,#5b5b5b 100%);border:1px solid #202020;border-radius:5px;"></div><div style="left:54px;top:1036px;width:22px;height:20px;background:linear-gradient(180deg,#a8d0b0 0%,#6d9a78 30%,#6d9a78 100%);border-radius:5.5px;box-shadow:0 0 0 1px rgba(20,20,20,.6);"></div><div style="left:55.200000000000045px;top:1037.2px;width:19.6px;height:17.6px;background:#6d9a78;border-radius:4.5px;"></div><div style="left:57.59999999999991px;top:1039.2px;width:14.8px;height:13.6px;background:#555;border:1px solid #d0d4d4;border-radius:1.5px;box-shadow:0 0 0 1px rgba(30,30,30,.55);"></div><svg style="left:58.0px;top:1039.6px;opacity:1" width="14" height="13" viewBox="0 0 14 13"><defs><linearGradient id="rgbg" x1="0" y1="0" x2="1" y2="1"><stop offset="0" stop-color="#f03020"/><stop offset=".5" stop-color="#f0e020"/><stop offset="1" stop-color="#20c040"/></linearGradient></defs><path d="M4 .5h9.500v12h-13v-8.500z" fill="url(#rgbg)" stroke="#fff" stroke-width=".800"/><path d="M.5 4L4 .5V4z" fill="#fff"/></svg><svg style="left:80.7px;top:1042.0px;opacity:1" width="8.6" height="8.8" viewBox="0 0 8.6 8.8"><path d="M0 0h8.6L4.3 8.8z" fill="#fff"/></svg><span class="t" style="left:98.50px;top:1039.30px;font-size:11px;line-height:14px;color:#dcdcdc;">L...</span><div style="left:119px;top:1038.5px;width:106px;height:15px;background:linear-gradient(180deg,#2d2d2d 0%,#232323 50%,#191919 100%);border-radius:4px;box-shadow:0 1px 0 rgba(255,255,255,.13),inset 0 1px 1px rgba(0,0,0,.5);"></div><span class="t" style="left:125.50px;top:1039.30px;font-size:11px;line-height:14px;color:#e9e9e9;letter-spacing:-0.643px;">RGB Color</span><svg style="left:215.5px;top:1046.6px;opacity:1" width="6" height="4.4" viewBox="0 0 6 4.4"><path d="M0 0h6L3.0 4.4z" fill="#c8c8c8"/></svg><div style="left:229px;top:1039px;width:14.5px;height:14px;background:linear-gradient(180deg,#2d2d2d,#1a1a1a);border-radius:3px;box-shadow:0 1px 0 rgba(255,255,255,.13);"></div><svg style="left:230.5px;top:1042.0px;opacity:1" width="12" height="8" viewBox="0 0 12 8"><path d="M.5 4Q6-1.500 11.500 4 6 9.500 .5 4z" fill="#f4f4f4"/><circle cx="6" cy="4" r="1.900" fill="#1a1a1a"/></svg><div style="left:65px;top:1062px;width:43px;height:40px;background:#ff00e4;border:1px solid #ff9af4;"></div><div style="left:114px;top:1061.5px;width:129.5px;height:15px;background:linear-gradient(180deg,#111 0%,#1e1e1e 50%,#2b2b2b 100%);border-radius:3px;box-shadow:0 1px 0 rgba(255,255,255,.12);"></div><svg style="left:119.0px;top:1065.6px;opacity:1" width="6.4" height="7" viewBox="0 0 6.4 7"><path d="M6.4 0v7L0 3.5z" fill="#d0d0d0"/></svg><svg style="left:232.5px;top:1065.6px;opacity:1" width="6.4" height="7" viewBox="0 0 6.4 7"><path d="M0 0v7l6.4-3.5z" fill="#d0d0d0"/></svg><span class="t" style="left:165.47px;top:1062.40px;font-size:11px;line-height:14px;color:#f0f0f0;letter-spacing:-0.193px;">1.000</span><div style="left:114px;top:1080.5px;width:129.5px;height:15px;background:linear-gradient(180deg,#111 0%,#1e1e1e 50%,#2b2b2b 100%);border-radius:3px;box-shadow:0 1px 0 rgba(255,255,255,.12);"></div><svg style="left:119.0px;top:1084.6px;opacity:1" width="6.4" height="7" viewBox="0 0 6.4 7"><path d="M6.4 0v7L0 3.5z" fill="#d0d0d0"/></svg><svg style="left:232.5px;top:1084.6px;opacity:1" width="6.4" height="7" viewBox="0 0 6.4 7"><path d="M0 0v7l6.4-3.5z" fill="#d0d0d0"/></svg><span class="t" style="left:175.79px;top:1081.40px;font-size:11px;line-height:14px;color:#f0f0f0;letter-spacing:-0.214px;">0</span></div><div style="left:8px;top:1146px;width:1714px;height:20px;background:#262626;"></div><span class="t" style="left:1383.00px;top:1149.30px;font-size:11px;line-height:14px;color:#e6e6e6;letter-spacing:-0.384px;">OctaneLive account:</span><span class="t" style="left:1487.00px;top:1149.30px;font-size:11px;line-height:14px;color:#14dc14;letter-spacing:-0.115px;">activated</span><span class="t" style="left:1556.50px;top:1149.30px;font-size:11px;line-height:14px;color:#e6e6e6;letter-spacing:-0.058px;">status:</span><span class="t" style="left:1598.50px;top:1149.30px;font-size:11px;line-height:14px;color:#14dc14;letter-spacing:-0.196px;">connected</span><span class="t" style="left:1678.50px;top:1149.30px;font-size:11px;line-height:14px;color:#e6e6e6;letter-spacing:0.066px;">act:</span><svg style="left:1704px;top:1148px" width="18" height="18" viewBox="0 0 18 18"><path d="M4 17L17 4M8 17L17 8M12 17l5-5" stroke="#4a4a4a" stroke-width="1.4"/></svg></div></body></html>
